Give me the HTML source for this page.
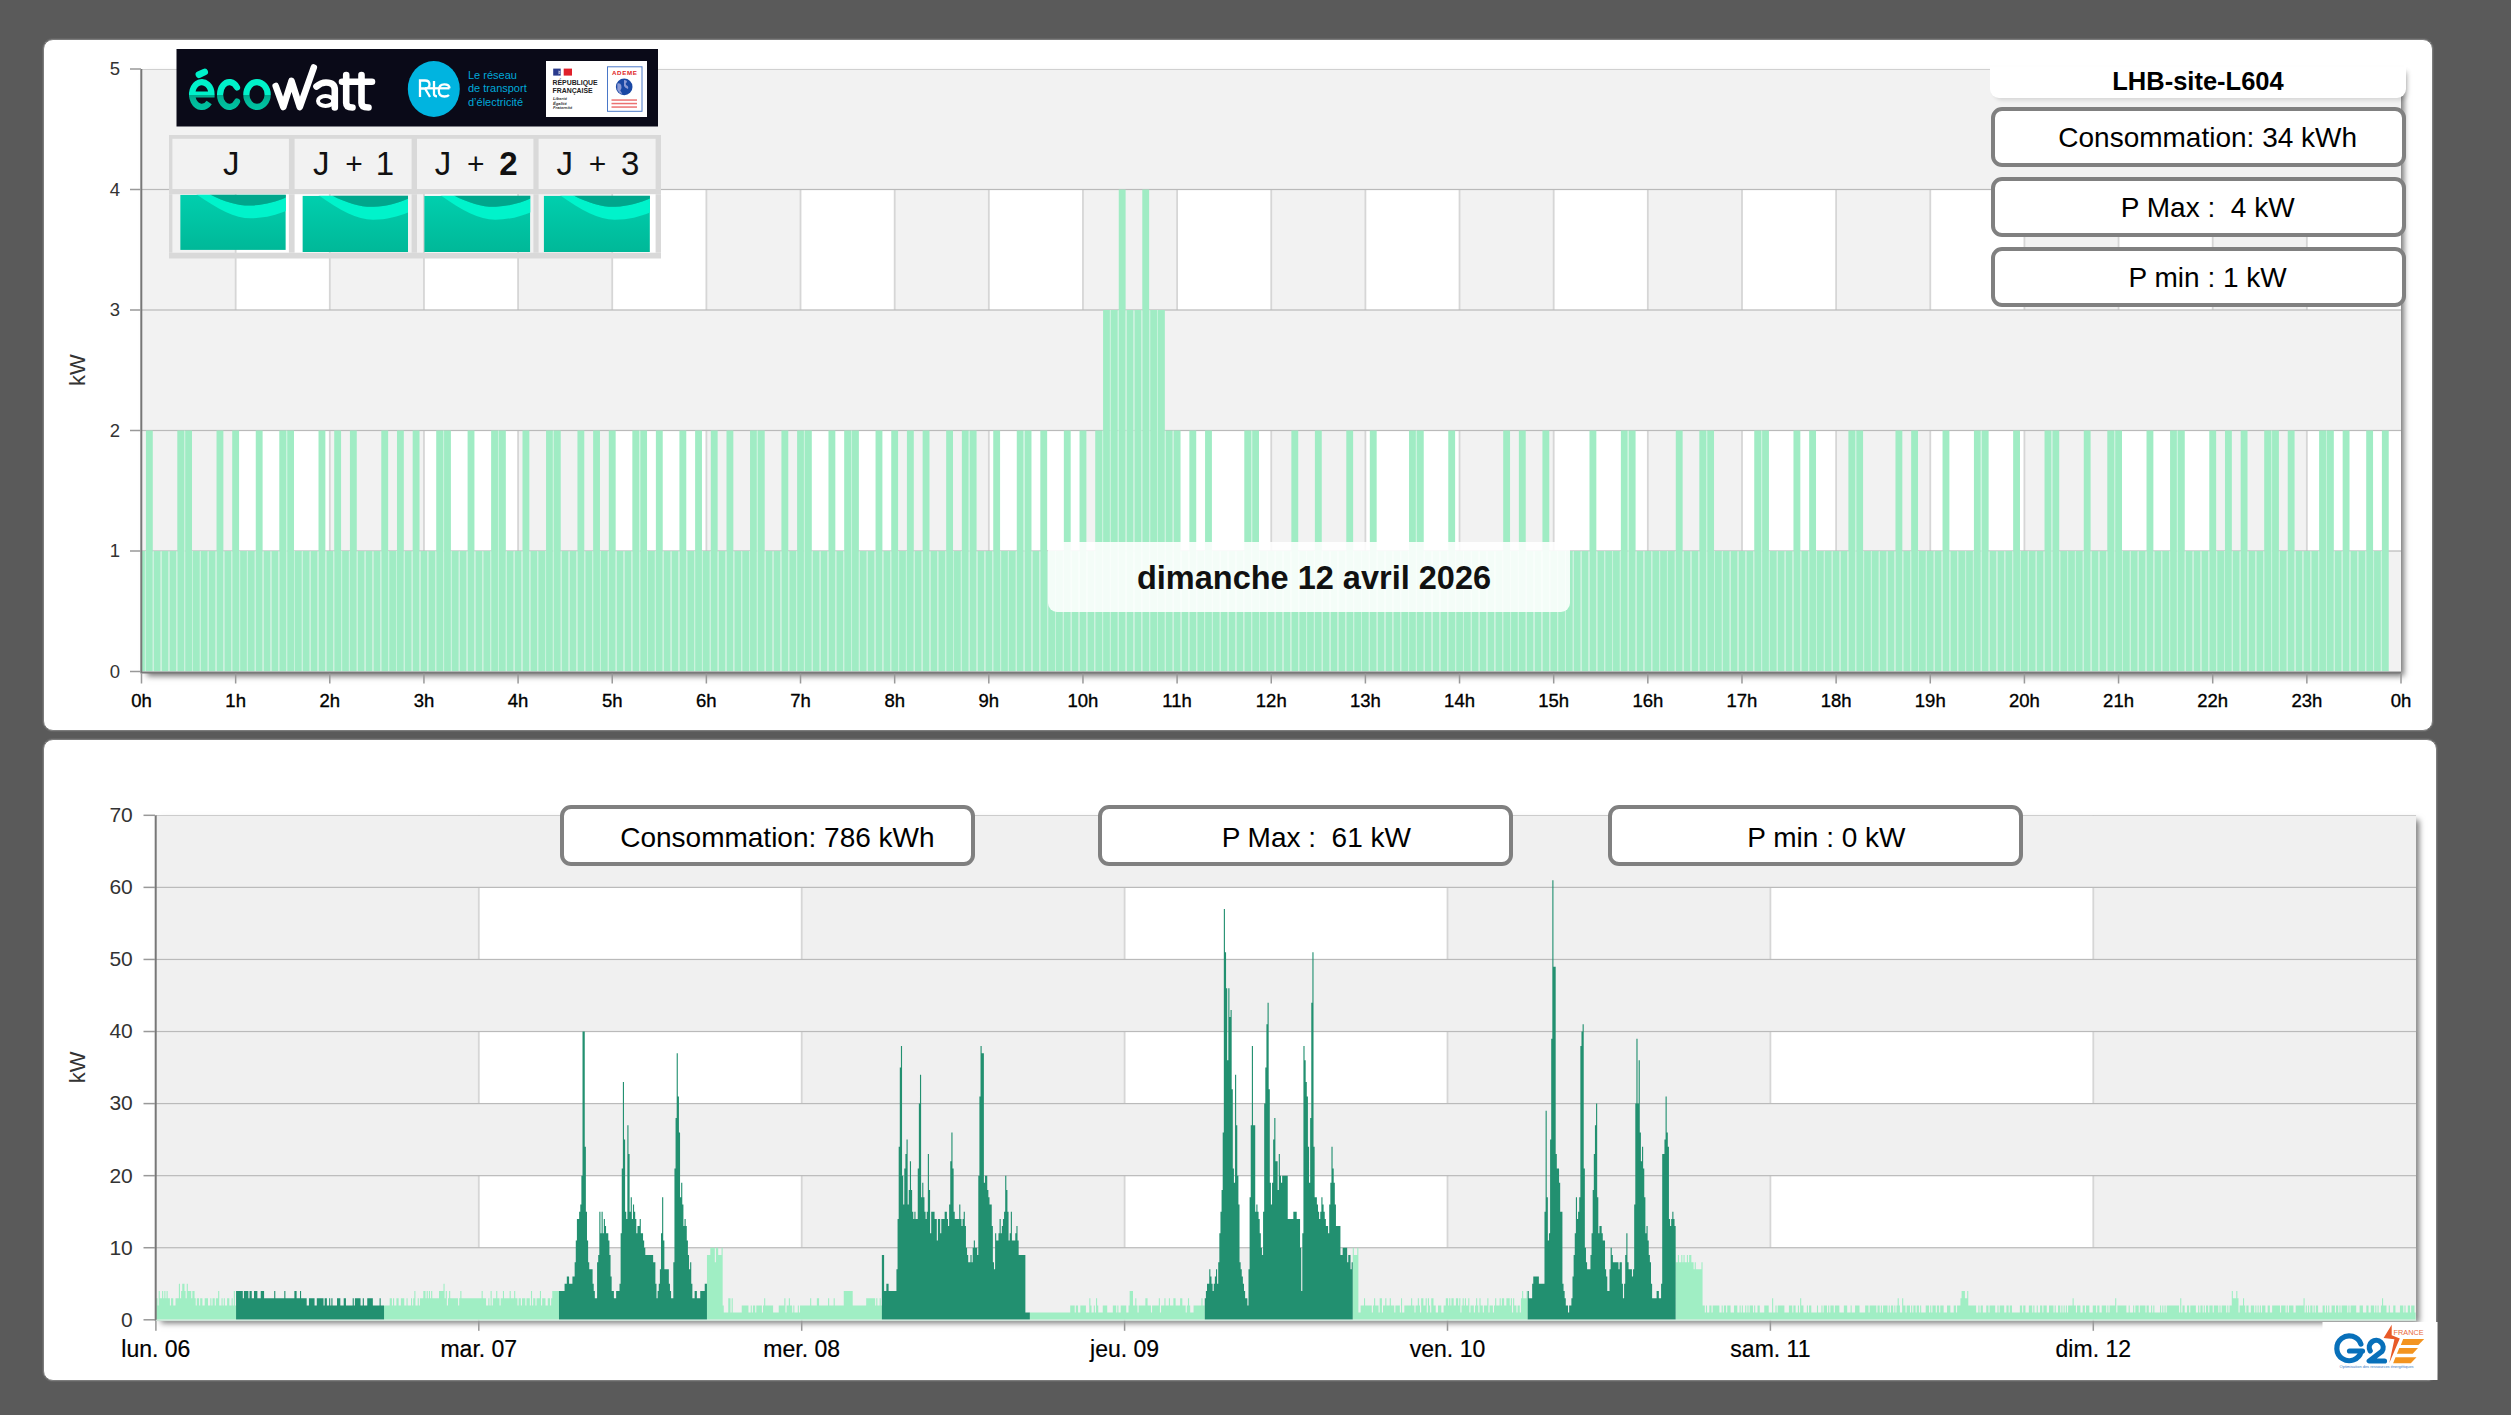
<!DOCTYPE html><html><head><meta charset="utf-8"><title>conso</title><style>
html,body{margin:0;padding:0}
body{width:2511px;height:1415px;background:#5a5a5a;overflow:hidden;position:relative;font-family:"Liberation Sans", sans-serif}
.p{position:absolute;background:#fff;border:1px solid #7c7c7c;box-sizing:border-box;border-radius:10px;box-shadow:0 0 0 1px #656565}
.sh{position:absolute;background:#fff;box-shadow:4px 4px 6px -1px rgba(0,0,0,.55)}
.bx{position:absolute;box-sizing:border-box;border:4px solid #808080;border-radius:11px;background:#fff;color:#000;font-size:28px;white-space:pre;text-align:center}
svg{position:absolute;left:0;top:0}
</style></head><body>
<div class="p" style="left:43px;top:39px;width:2390px;height:692px"></div>
<div class="p" style="left:43px;top:739px;width:2394px;height:642px"></div>
<div class="sh" style="left:141.5px;top:69.0px;width:2259.5px;height:604.0px"></div>
<div class="sh" style="left:155.9px;top:815.3px;width:2260.3px;height:505.0px"></div>
<svg width="2511" height="1415" viewBox="0 0 2511 1415" style="font-family:'Liberation Sans', sans-serif">
<defs><clipPath id="tclip"><rect x="141.50" y="69.00" width="2259.50" height="602.50"/></clipPath>
<clipPath id="bclip"><rect x="155.90" y="815.31" width="2260.30" height="504.49"/></clipPath></defs>
<g clip-path="url(#tclip)">
<rect x="141.50" y="69.00" width="94.15" height="602.50" fill="#f2f2f2"/>
<rect x="329.79" y="69.00" width="94.15" height="602.50" fill="#f2f2f2"/>
<rect x="518.08" y="69.00" width="94.15" height="602.50" fill="#f2f2f2"/>
<rect x="706.38" y="69.00" width="94.15" height="602.50" fill="#f2f2f2"/>
<rect x="894.67" y="69.00" width="94.15" height="602.50" fill="#f2f2f2"/>
<rect x="1082.96" y="69.00" width="94.15" height="602.50" fill="#f2f2f2"/>
<rect x="1271.25" y="69.00" width="94.15" height="602.50" fill="#f2f2f2"/>
<rect x="1459.54" y="69.00" width="94.15" height="602.50" fill="#f2f2f2"/>
<rect x="1647.83" y="69.00" width="94.15" height="602.50" fill="#f2f2f2"/>
<rect x="1836.12" y="69.00" width="94.15" height="602.50" fill="#f2f2f2"/>
<rect x="2024.42" y="69.00" width="94.15" height="602.50" fill="#f2f2f2"/>
<rect x="2212.71" y="69.00" width="94.15" height="602.50" fill="#f2f2f2"/>
<rect x="234.75" y="69.00" width="1.8" height="602.50" fill="#d6d6d6"/>
<rect x="328.89" y="69.00" width="1.8" height="602.50" fill="#d6d6d6"/>
<rect x="423.04" y="69.00" width="1.8" height="602.50" fill="#d6d6d6"/>
<rect x="517.18" y="69.00" width="1.8" height="602.50" fill="#d6d6d6"/>
<rect x="611.33" y="69.00" width="1.8" height="602.50" fill="#d6d6d6"/>
<rect x="705.48" y="69.00" width="1.8" height="602.50" fill="#d6d6d6"/>
<rect x="799.62" y="69.00" width="1.8" height="602.50" fill="#d6d6d6"/>
<rect x="893.77" y="69.00" width="1.8" height="602.50" fill="#d6d6d6"/>
<rect x="987.91" y="69.00" width="1.8" height="602.50" fill="#d6d6d6"/>
<rect x="1082.06" y="69.00" width="1.8" height="602.50" fill="#d6d6d6"/>
<rect x="1176.20" y="69.00" width="1.8" height="602.50" fill="#d6d6d6"/>
<rect x="1270.35" y="69.00" width="1.8" height="602.50" fill="#d6d6d6"/>
<rect x="1364.50" y="69.00" width="1.8" height="602.50" fill="#d6d6d6"/>
<rect x="1458.64" y="69.00" width="1.8" height="602.50" fill="#d6d6d6"/>
<rect x="1552.79" y="69.00" width="1.8" height="602.50" fill="#d6d6d6"/>
<rect x="1646.93" y="69.00" width="1.8" height="602.50" fill="#d6d6d6"/>
<rect x="1741.08" y="69.00" width="1.8" height="602.50" fill="#d6d6d6"/>
<rect x="1835.22" y="69.00" width="1.8" height="602.50" fill="#d6d6d6"/>
<rect x="1929.37" y="69.00" width="1.8" height="602.50" fill="#d6d6d6"/>
<rect x="2023.52" y="69.00" width="1.8" height="602.50" fill="#d6d6d6"/>
<rect x="2117.66" y="69.00" width="1.8" height="602.50" fill="#d6d6d6"/>
<rect x="2211.81" y="69.00" width="1.8" height="602.50" fill="#d6d6d6"/>
<rect x="2305.95" y="69.00" width="1.8" height="602.50" fill="#d6d6d6"/>
<rect x="141.50" y="551.00" width="2259.50" height="120.50" fill="#f2f2f2"/>
<rect x="141.50" y="310.00" width="2259.50" height="120.50" fill="#f2f2f2"/>
<rect x="141.50" y="69.00" width="2259.50" height="120.50" fill="#f2f2f2"/>
<rect x="141.50" y="550.40" width="2259.50" height="1.2" fill="#bababa"/>
<rect x="141.50" y="429.90" width="2259.50" height="1.2" fill="#bababa"/>
<rect x="141.50" y="309.40" width="2259.50" height="1.2" fill="#bababa"/>
<rect x="141.50" y="188.90" width="2259.50" height="1.2" fill="#bababa"/>
<rect x="141.50" y="68.40" width="2259.50" height="1.2" fill="#bababa"/>
<rect x="138.08" y="551.00" width="6.85" height="120.50" fill="#a0ecc4"/>
<rect x="145.92" y="430.50" width="6.85" height="241.00" fill="#a0ecc4"/>
<rect x="153.77" y="551.00" width="6.85" height="120.50" fill="#a0ecc4"/>
<rect x="161.61" y="551.00" width="6.85" height="120.50" fill="#a0ecc4"/>
<rect x="169.46" y="551.00" width="6.85" height="120.50" fill="#a0ecc4"/>
<rect x="177.30" y="430.50" width="6.85" height="241.00" fill="#a0ecc4"/>
<rect x="185.15" y="430.50" width="6.85" height="241.00" fill="#a0ecc4"/>
<rect x="193.00" y="551.00" width="6.85" height="120.50" fill="#a0ecc4"/>
<rect x="200.84" y="551.00" width="6.85" height="120.50" fill="#a0ecc4"/>
<rect x="208.69" y="551.00" width="6.85" height="120.50" fill="#a0ecc4"/>
<rect x="216.53" y="430.50" width="6.85" height="241.00" fill="#a0ecc4"/>
<rect x="224.38" y="551.00" width="6.85" height="120.50" fill="#a0ecc4"/>
<rect x="232.22" y="430.50" width="6.85" height="241.00" fill="#a0ecc4"/>
<rect x="240.07" y="551.00" width="6.85" height="120.50" fill="#a0ecc4"/>
<rect x="247.91" y="551.00" width="6.85" height="120.50" fill="#a0ecc4"/>
<rect x="255.76" y="430.50" width="6.85" height="241.00" fill="#a0ecc4"/>
<rect x="263.61" y="551.00" width="6.85" height="120.50" fill="#a0ecc4"/>
<rect x="271.45" y="551.00" width="6.85" height="120.50" fill="#a0ecc4"/>
<rect x="279.30" y="430.50" width="6.85" height="241.00" fill="#a0ecc4"/>
<rect x="287.14" y="430.50" width="6.85" height="241.00" fill="#a0ecc4"/>
<rect x="294.99" y="551.00" width="6.85" height="120.50" fill="#a0ecc4"/>
<rect x="302.83" y="551.00" width="6.85" height="120.50" fill="#a0ecc4"/>
<rect x="310.68" y="551.00" width="6.85" height="120.50" fill="#a0ecc4"/>
<rect x="318.52" y="430.50" width="6.85" height="241.00" fill="#a0ecc4"/>
<rect x="326.37" y="551.00" width="6.85" height="120.50" fill="#a0ecc4"/>
<rect x="334.21" y="430.50" width="6.85" height="241.00" fill="#a0ecc4"/>
<rect x="342.06" y="551.00" width="6.85" height="120.50" fill="#a0ecc4"/>
<rect x="349.91" y="430.50" width="6.85" height="241.00" fill="#a0ecc4"/>
<rect x="357.75" y="551.00" width="6.85" height="120.50" fill="#a0ecc4"/>
<rect x="365.60" y="551.00" width="6.85" height="120.50" fill="#a0ecc4"/>
<rect x="373.44" y="551.00" width="6.85" height="120.50" fill="#a0ecc4"/>
<rect x="381.29" y="430.50" width="6.85" height="241.00" fill="#a0ecc4"/>
<rect x="389.13" y="551.00" width="6.85" height="120.50" fill="#a0ecc4"/>
<rect x="396.98" y="430.50" width="6.85" height="241.00" fill="#a0ecc4"/>
<rect x="404.82" y="551.00" width="6.85" height="120.50" fill="#a0ecc4"/>
<rect x="412.67" y="430.50" width="6.85" height="241.00" fill="#a0ecc4"/>
<rect x="420.51" y="551.00" width="6.85" height="120.50" fill="#a0ecc4"/>
<rect x="428.36" y="551.00" width="6.85" height="120.50" fill="#a0ecc4"/>
<rect x="436.21" y="430.50" width="6.85" height="241.00" fill="#a0ecc4"/>
<rect x="444.05" y="430.50" width="6.85" height="241.00" fill="#a0ecc4"/>
<rect x="451.90" y="551.00" width="6.85" height="120.50" fill="#a0ecc4"/>
<rect x="459.74" y="551.00" width="6.85" height="120.50" fill="#a0ecc4"/>
<rect x="467.59" y="430.50" width="6.85" height="241.00" fill="#a0ecc4"/>
<rect x="475.43" y="551.00" width="6.85" height="120.50" fill="#a0ecc4"/>
<rect x="483.28" y="551.00" width="6.85" height="120.50" fill="#a0ecc4"/>
<rect x="491.12" y="430.50" width="6.85" height="241.00" fill="#a0ecc4"/>
<rect x="498.97" y="430.50" width="6.85" height="241.00" fill="#a0ecc4"/>
<rect x="506.82" y="551.00" width="6.85" height="120.50" fill="#a0ecc4"/>
<rect x="514.66" y="551.00" width="6.85" height="120.50" fill="#a0ecc4"/>
<rect x="522.51" y="430.50" width="6.85" height="241.00" fill="#a0ecc4"/>
<rect x="530.35" y="551.00" width="6.85" height="120.50" fill="#a0ecc4"/>
<rect x="538.20" y="551.00" width="6.85" height="120.50" fill="#a0ecc4"/>
<rect x="546.04" y="430.50" width="6.85" height="241.00" fill="#a0ecc4"/>
<rect x="553.89" y="430.50" width="6.85" height="241.00" fill="#a0ecc4"/>
<rect x="561.73" y="551.00" width="6.85" height="120.50" fill="#a0ecc4"/>
<rect x="569.58" y="551.00" width="6.85" height="120.50" fill="#a0ecc4"/>
<rect x="577.42" y="430.50" width="6.85" height="241.00" fill="#a0ecc4"/>
<rect x="585.27" y="551.00" width="6.85" height="120.50" fill="#a0ecc4"/>
<rect x="593.12" y="430.50" width="6.85" height="241.00" fill="#a0ecc4"/>
<rect x="600.96" y="551.00" width="6.85" height="120.50" fill="#a0ecc4"/>
<rect x="608.81" y="430.50" width="6.85" height="241.00" fill="#a0ecc4"/>
<rect x="616.65" y="551.00" width="6.85" height="120.50" fill="#a0ecc4"/>
<rect x="624.50" y="551.00" width="6.85" height="120.50" fill="#a0ecc4"/>
<rect x="632.34" y="430.50" width="6.85" height="241.00" fill="#a0ecc4"/>
<rect x="640.19" y="430.50" width="6.85" height="241.00" fill="#a0ecc4"/>
<rect x="648.03" y="551.00" width="6.85" height="120.50" fill="#a0ecc4"/>
<rect x="655.88" y="430.50" width="6.85" height="241.00" fill="#a0ecc4"/>
<rect x="663.72" y="551.00" width="6.85" height="120.50" fill="#a0ecc4"/>
<rect x="671.57" y="551.00" width="6.85" height="120.50" fill="#a0ecc4"/>
<rect x="679.42" y="430.50" width="6.85" height="241.00" fill="#a0ecc4"/>
<rect x="687.26" y="551.00" width="6.85" height="120.50" fill="#a0ecc4"/>
<rect x="695.11" y="430.50" width="6.85" height="241.00" fill="#a0ecc4"/>
<rect x="702.95" y="551.00" width="6.85" height="120.50" fill="#a0ecc4"/>
<rect x="710.80" y="430.50" width="6.85" height="241.00" fill="#a0ecc4"/>
<rect x="718.64" y="551.00" width="6.85" height="120.50" fill="#a0ecc4"/>
<rect x="726.49" y="430.50" width="6.85" height="241.00" fill="#a0ecc4"/>
<rect x="734.33" y="551.00" width="6.85" height="120.50" fill="#a0ecc4"/>
<rect x="742.18" y="551.00" width="6.85" height="120.50" fill="#a0ecc4"/>
<rect x="750.03" y="430.50" width="6.85" height="241.00" fill="#a0ecc4"/>
<rect x="757.87" y="430.50" width="6.85" height="241.00" fill="#a0ecc4"/>
<rect x="765.72" y="551.00" width="6.85" height="120.50" fill="#a0ecc4"/>
<rect x="773.56" y="551.00" width="6.85" height="120.50" fill="#a0ecc4"/>
<rect x="781.41" y="430.50" width="6.85" height="241.00" fill="#a0ecc4"/>
<rect x="789.25" y="551.00" width="6.85" height="120.50" fill="#a0ecc4"/>
<rect x="797.10" y="430.50" width="6.85" height="241.00" fill="#a0ecc4"/>
<rect x="804.94" y="430.50" width="6.85" height="241.00" fill="#a0ecc4"/>
<rect x="812.79" y="551.00" width="6.85" height="120.50" fill="#a0ecc4"/>
<rect x="820.63" y="551.00" width="6.85" height="120.50" fill="#a0ecc4"/>
<rect x="828.48" y="430.50" width="6.85" height="241.00" fill="#a0ecc4"/>
<rect x="836.33" y="551.00" width="6.85" height="120.50" fill="#a0ecc4"/>
<rect x="844.17" y="430.50" width="6.85" height="241.00" fill="#a0ecc4"/>
<rect x="852.02" y="430.50" width="6.85" height="241.00" fill="#a0ecc4"/>
<rect x="859.86" y="551.00" width="6.85" height="120.50" fill="#a0ecc4"/>
<rect x="867.71" y="551.00" width="6.85" height="120.50" fill="#a0ecc4"/>
<rect x="875.55" y="430.50" width="6.85" height="241.00" fill="#a0ecc4"/>
<rect x="883.40" y="551.00" width="6.85" height="120.50" fill="#a0ecc4"/>
<rect x="891.24" y="430.50" width="6.85" height="241.00" fill="#a0ecc4"/>
<rect x="899.09" y="551.00" width="6.85" height="120.50" fill="#a0ecc4"/>
<rect x="906.93" y="430.50" width="6.85" height="241.00" fill="#a0ecc4"/>
<rect x="914.78" y="551.00" width="6.85" height="120.50" fill="#a0ecc4"/>
<rect x="922.63" y="430.50" width="6.85" height="241.00" fill="#a0ecc4"/>
<rect x="930.47" y="551.00" width="6.85" height="120.50" fill="#a0ecc4"/>
<rect x="938.32" y="551.00" width="6.85" height="120.50" fill="#a0ecc4"/>
<rect x="946.16" y="430.50" width="6.85" height="241.00" fill="#a0ecc4"/>
<rect x="954.01" y="551.00" width="6.85" height="120.50" fill="#a0ecc4"/>
<rect x="961.85" y="430.50" width="6.85" height="241.00" fill="#a0ecc4"/>
<rect x="969.70" y="430.50" width="6.85" height="241.00" fill="#a0ecc4"/>
<rect x="977.54" y="551.00" width="6.85" height="120.50" fill="#a0ecc4"/>
<rect x="985.39" y="551.00" width="6.85" height="120.50" fill="#a0ecc4"/>
<rect x="993.24" y="430.50" width="6.85" height="241.00" fill="#a0ecc4"/>
<rect x="1001.08" y="551.00" width="6.85" height="120.50" fill="#a0ecc4"/>
<rect x="1008.93" y="551.00" width="6.85" height="120.50" fill="#a0ecc4"/>
<rect x="1016.77" y="430.50" width="6.85" height="241.00" fill="#a0ecc4"/>
<rect x="1024.62" y="430.50" width="6.85" height="241.00" fill="#a0ecc4"/>
<rect x="1032.46" y="551.00" width="6.85" height="120.50" fill="#a0ecc4"/>
<rect x="1040.31" y="430.50" width="6.85" height="241.00" fill="#a0ecc4"/>
<rect x="1048.15" y="551.00" width="6.85" height="120.50" fill="#a0ecc4"/>
<rect x="1056.00" y="551.00" width="6.85" height="120.50" fill="#a0ecc4"/>
<rect x="1063.84" y="430.50" width="6.85" height="241.00" fill="#a0ecc4"/>
<rect x="1071.69" y="551.00" width="6.85" height="120.50" fill="#a0ecc4"/>
<rect x="1079.54" y="430.50" width="6.85" height="241.00" fill="#a0ecc4"/>
<rect x="1087.38" y="551.00" width="6.85" height="120.50" fill="#a0ecc4"/>
<rect x="1095.23" y="430.50" width="6.85" height="241.00" fill="#a0ecc4"/>
<rect x="1103.07" y="310.00" width="6.85" height="361.50" fill="#a0ecc4"/>
<rect x="1110.92" y="310.00" width="6.85" height="361.50" fill="#a0ecc4"/>
<rect x="1118.76" y="189.50" width="6.85" height="482.00" fill="#a0ecc4"/>
<rect x="1126.61" y="310.00" width="6.85" height="361.50" fill="#a0ecc4"/>
<rect x="1134.45" y="310.00" width="6.85" height="361.50" fill="#a0ecc4"/>
<rect x="1142.30" y="189.50" width="6.85" height="482.00" fill="#a0ecc4"/>
<rect x="1150.14" y="310.00" width="6.85" height="361.50" fill="#a0ecc4"/>
<rect x="1157.99" y="310.00" width="6.85" height="361.50" fill="#a0ecc4"/>
<rect x="1165.84" y="430.50" width="6.85" height="241.00" fill="#a0ecc4"/>
<rect x="1173.68" y="430.50" width="6.85" height="241.00" fill="#a0ecc4"/>
<rect x="1181.53" y="551.00" width="6.85" height="120.50" fill="#a0ecc4"/>
<rect x="1189.37" y="430.50" width="6.85" height="241.00" fill="#a0ecc4"/>
<rect x="1197.22" y="551.00" width="6.85" height="120.50" fill="#a0ecc4"/>
<rect x="1205.06" y="430.50" width="6.85" height="241.00" fill="#a0ecc4"/>
<rect x="1212.91" y="551.00" width="6.85" height="120.50" fill="#a0ecc4"/>
<rect x="1220.75" y="551.00" width="6.85" height="120.50" fill="#a0ecc4"/>
<rect x="1228.60" y="551.00" width="6.85" height="120.50" fill="#a0ecc4"/>
<rect x="1236.45" y="551.00" width="6.85" height="120.50" fill="#a0ecc4"/>
<rect x="1244.29" y="430.50" width="6.85" height="241.00" fill="#a0ecc4"/>
<rect x="1252.14" y="430.50" width="6.85" height="241.00" fill="#a0ecc4"/>
<rect x="1259.98" y="551.00" width="6.85" height="120.50" fill="#a0ecc4"/>
<rect x="1267.83" y="551.00" width="6.85" height="120.50" fill="#a0ecc4"/>
<rect x="1275.67" y="551.00" width="6.85" height="120.50" fill="#a0ecc4"/>
<rect x="1283.52" y="551.00" width="6.85" height="120.50" fill="#a0ecc4"/>
<rect x="1291.36" y="430.50" width="6.85" height="241.00" fill="#a0ecc4"/>
<rect x="1299.21" y="551.00" width="6.85" height="120.50" fill="#a0ecc4"/>
<rect x="1307.05" y="551.00" width="6.85" height="120.50" fill="#a0ecc4"/>
<rect x="1314.90" y="430.50" width="6.85" height="241.00" fill="#a0ecc4"/>
<rect x="1322.75" y="551.00" width="6.85" height="120.50" fill="#a0ecc4"/>
<rect x="1330.59" y="551.00" width="6.85" height="120.50" fill="#a0ecc4"/>
<rect x="1338.44" y="551.00" width="6.85" height="120.50" fill="#a0ecc4"/>
<rect x="1346.28" y="430.50" width="6.85" height="241.00" fill="#a0ecc4"/>
<rect x="1354.13" y="551.00" width="6.85" height="120.50" fill="#a0ecc4"/>
<rect x="1361.97" y="551.00" width="6.85" height="120.50" fill="#a0ecc4"/>
<rect x="1369.82" y="430.50" width="6.85" height="241.00" fill="#a0ecc4"/>
<rect x="1377.66" y="551.00" width="6.85" height="120.50" fill="#a0ecc4"/>
<rect x="1385.51" y="551.00" width="6.85" height="120.50" fill="#a0ecc4"/>
<rect x="1393.36" y="551.00" width="6.85" height="120.50" fill="#a0ecc4"/>
<rect x="1401.20" y="551.00" width="6.85" height="120.50" fill="#a0ecc4"/>
<rect x="1409.05" y="430.50" width="6.85" height="241.00" fill="#a0ecc4"/>
<rect x="1416.89" y="430.50" width="6.85" height="241.00" fill="#a0ecc4"/>
<rect x="1424.74" y="551.00" width="6.85" height="120.50" fill="#a0ecc4"/>
<rect x="1432.58" y="551.00" width="6.85" height="120.50" fill="#a0ecc4"/>
<rect x="1440.43" y="551.00" width="6.85" height="120.50" fill="#a0ecc4"/>
<rect x="1448.27" y="430.50" width="6.85" height="241.00" fill="#a0ecc4"/>
<rect x="1456.12" y="551.00" width="6.85" height="120.50" fill="#a0ecc4"/>
<rect x="1463.96" y="551.00" width="6.85" height="120.50" fill="#a0ecc4"/>
<rect x="1471.81" y="551.00" width="6.85" height="120.50" fill="#a0ecc4"/>
<rect x="1479.66" y="551.00" width="6.85" height="120.50" fill="#a0ecc4"/>
<rect x="1487.50" y="551.00" width="6.85" height="120.50" fill="#a0ecc4"/>
<rect x="1495.35" y="551.00" width="6.85" height="120.50" fill="#a0ecc4"/>
<rect x="1503.19" y="430.50" width="6.85" height="241.00" fill="#a0ecc4"/>
<rect x="1511.04" y="551.00" width="6.85" height="120.50" fill="#a0ecc4"/>
<rect x="1518.88" y="430.50" width="6.85" height="241.00" fill="#a0ecc4"/>
<rect x="1526.73" y="551.00" width="6.85" height="120.50" fill="#a0ecc4"/>
<rect x="1534.57" y="551.00" width="6.85" height="120.50" fill="#a0ecc4"/>
<rect x="1542.42" y="430.50" width="6.85" height="241.00" fill="#a0ecc4"/>
<rect x="1550.26" y="551.00" width="6.85" height="120.50" fill="#a0ecc4"/>
<rect x="1558.11" y="551.00" width="6.85" height="120.50" fill="#a0ecc4"/>
<rect x="1565.96" y="551.00" width="6.85" height="120.50" fill="#a0ecc4"/>
<rect x="1573.80" y="551.00" width="6.85" height="120.50" fill="#a0ecc4"/>
<rect x="1581.65" y="551.00" width="6.85" height="120.50" fill="#a0ecc4"/>
<rect x="1589.49" y="430.50" width="6.85" height="241.00" fill="#a0ecc4"/>
<rect x="1597.34" y="551.00" width="6.85" height="120.50" fill="#a0ecc4"/>
<rect x="1605.18" y="551.00" width="6.85" height="120.50" fill="#a0ecc4"/>
<rect x="1613.03" y="551.00" width="6.85" height="120.50" fill="#a0ecc4"/>
<rect x="1620.87" y="430.50" width="6.85" height="241.00" fill="#a0ecc4"/>
<rect x="1628.72" y="430.50" width="6.85" height="241.00" fill="#a0ecc4"/>
<rect x="1636.57" y="551.00" width="6.85" height="120.50" fill="#a0ecc4"/>
<rect x="1644.41" y="551.00" width="6.85" height="120.50" fill="#a0ecc4"/>
<rect x="1652.26" y="551.00" width="6.85" height="120.50" fill="#a0ecc4"/>
<rect x="1660.10" y="551.00" width="6.85" height="120.50" fill="#a0ecc4"/>
<rect x="1667.95" y="551.00" width="6.85" height="120.50" fill="#a0ecc4"/>
<rect x="1675.79" y="430.50" width="6.85" height="241.00" fill="#a0ecc4"/>
<rect x="1683.64" y="551.00" width="6.85" height="120.50" fill="#a0ecc4"/>
<rect x="1691.48" y="551.00" width="6.85" height="120.50" fill="#a0ecc4"/>
<rect x="1699.33" y="430.50" width="6.85" height="241.00" fill="#a0ecc4"/>
<rect x="1707.17" y="430.50" width="6.85" height="241.00" fill="#a0ecc4"/>
<rect x="1715.02" y="551.00" width="6.85" height="120.50" fill="#a0ecc4"/>
<rect x="1722.87" y="551.00" width="6.85" height="120.50" fill="#a0ecc4"/>
<rect x="1730.71" y="551.00" width="6.85" height="120.50" fill="#a0ecc4"/>
<rect x="1738.56" y="551.00" width="6.85" height="120.50" fill="#a0ecc4"/>
<rect x="1746.40" y="551.00" width="6.85" height="120.50" fill="#a0ecc4"/>
<rect x="1754.25" y="430.50" width="6.85" height="241.00" fill="#a0ecc4"/>
<rect x="1762.09" y="430.50" width="6.85" height="241.00" fill="#a0ecc4"/>
<rect x="1769.94" y="551.00" width="6.85" height="120.50" fill="#a0ecc4"/>
<rect x="1777.78" y="551.00" width="6.85" height="120.50" fill="#a0ecc4"/>
<rect x="1785.63" y="551.00" width="6.85" height="120.50" fill="#a0ecc4"/>
<rect x="1793.47" y="430.50" width="6.85" height="241.00" fill="#a0ecc4"/>
<rect x="1801.32" y="551.00" width="6.85" height="120.50" fill="#a0ecc4"/>
<rect x="1809.17" y="430.50" width="6.85" height="241.00" fill="#a0ecc4"/>
<rect x="1817.01" y="551.00" width="6.85" height="120.50" fill="#a0ecc4"/>
<rect x="1824.86" y="551.00" width="6.85" height="120.50" fill="#a0ecc4"/>
<rect x="1832.70" y="551.00" width="6.85" height="120.50" fill="#a0ecc4"/>
<rect x="1840.55" y="551.00" width="6.85" height="120.50" fill="#a0ecc4"/>
<rect x="1848.39" y="430.50" width="6.85" height="241.00" fill="#a0ecc4"/>
<rect x="1856.24" y="430.50" width="6.85" height="241.00" fill="#a0ecc4"/>
<rect x="1864.08" y="551.00" width="6.85" height="120.50" fill="#a0ecc4"/>
<rect x="1871.93" y="551.00" width="6.85" height="120.50" fill="#a0ecc4"/>
<rect x="1879.78" y="551.00" width="6.85" height="120.50" fill="#a0ecc4"/>
<rect x="1887.62" y="551.00" width="6.85" height="120.50" fill="#a0ecc4"/>
<rect x="1895.47" y="430.50" width="6.85" height="241.00" fill="#a0ecc4"/>
<rect x="1903.31" y="551.00" width="6.85" height="120.50" fill="#a0ecc4"/>
<rect x="1911.16" y="430.50" width="6.85" height="241.00" fill="#a0ecc4"/>
<rect x="1919.00" y="551.00" width="6.85" height="120.50" fill="#a0ecc4"/>
<rect x="1926.85" y="551.00" width="6.85" height="120.50" fill="#a0ecc4"/>
<rect x="1934.69" y="551.00" width="6.85" height="120.50" fill="#a0ecc4"/>
<rect x="1942.54" y="430.50" width="6.85" height="241.00" fill="#a0ecc4"/>
<rect x="1950.38" y="551.00" width="6.85" height="120.50" fill="#a0ecc4"/>
<rect x="1958.23" y="551.00" width="6.85" height="120.50" fill="#a0ecc4"/>
<rect x="1966.08" y="551.00" width="6.85" height="120.50" fill="#a0ecc4"/>
<rect x="1973.92" y="430.50" width="6.85" height="241.00" fill="#a0ecc4"/>
<rect x="1981.77" y="430.50" width="6.85" height="241.00" fill="#a0ecc4"/>
<rect x="1989.61" y="551.00" width="6.85" height="120.50" fill="#a0ecc4"/>
<rect x="1997.46" y="551.00" width="6.85" height="120.50" fill="#a0ecc4"/>
<rect x="2005.30" y="551.00" width="6.85" height="120.50" fill="#a0ecc4"/>
<rect x="2013.15" y="430.50" width="6.85" height="241.00" fill="#a0ecc4"/>
<rect x="2020.99" y="551.00" width="6.85" height="120.50" fill="#a0ecc4"/>
<rect x="2028.84" y="551.00" width="6.85" height="120.50" fill="#a0ecc4"/>
<rect x="2036.68" y="551.00" width="6.85" height="120.50" fill="#a0ecc4"/>
<rect x="2044.53" y="430.50" width="6.85" height="241.00" fill="#a0ecc4"/>
<rect x="2052.38" y="430.50" width="6.85" height="241.00" fill="#a0ecc4"/>
<rect x="2060.22" y="551.00" width="6.85" height="120.50" fill="#a0ecc4"/>
<rect x="2068.07" y="551.00" width="6.85" height="120.50" fill="#a0ecc4"/>
<rect x="2075.91" y="551.00" width="6.85" height="120.50" fill="#a0ecc4"/>
<rect x="2083.76" y="430.50" width="6.85" height="241.00" fill="#a0ecc4"/>
<rect x="2091.60" y="551.00" width="6.85" height="120.50" fill="#a0ecc4"/>
<rect x="2099.45" y="551.00" width="6.85" height="120.50" fill="#a0ecc4"/>
<rect x="2107.29" y="430.50" width="6.85" height="241.00" fill="#a0ecc4"/>
<rect x="2115.14" y="430.50" width="6.85" height="241.00" fill="#a0ecc4"/>
<rect x="2122.99" y="551.00" width="6.85" height="120.50" fill="#a0ecc4"/>
<rect x="2130.83" y="551.00" width="6.85" height="120.50" fill="#a0ecc4"/>
<rect x="2138.68" y="551.00" width="6.85" height="120.50" fill="#a0ecc4"/>
<rect x="2146.52" y="430.50" width="6.85" height="241.00" fill="#a0ecc4"/>
<rect x="2154.37" y="551.00" width="6.85" height="120.50" fill="#a0ecc4"/>
<rect x="2162.21" y="551.00" width="6.85" height="120.50" fill="#a0ecc4"/>
<rect x="2170.06" y="430.50" width="6.85" height="241.00" fill="#a0ecc4"/>
<rect x="2177.90" y="430.50" width="6.85" height="241.00" fill="#a0ecc4"/>
<rect x="2185.75" y="551.00" width="6.85" height="120.50" fill="#a0ecc4"/>
<rect x="2193.59" y="551.00" width="6.85" height="120.50" fill="#a0ecc4"/>
<rect x="2201.44" y="551.00" width="6.85" height="120.50" fill="#a0ecc4"/>
<rect x="2209.29" y="430.50" width="6.85" height="241.00" fill="#a0ecc4"/>
<rect x="2217.13" y="551.00" width="6.85" height="120.50" fill="#a0ecc4"/>
<rect x="2224.98" y="430.50" width="6.85" height="241.00" fill="#a0ecc4"/>
<rect x="2232.82" y="551.00" width="6.85" height="120.50" fill="#a0ecc4"/>
<rect x="2240.67" y="430.50" width="6.85" height="241.00" fill="#a0ecc4"/>
<rect x="2248.51" y="551.00" width="6.85" height="120.50" fill="#a0ecc4"/>
<rect x="2256.36" y="551.00" width="6.85" height="120.50" fill="#a0ecc4"/>
<rect x="2264.20" y="430.50" width="6.85" height="241.00" fill="#a0ecc4"/>
<rect x="2272.05" y="430.50" width="6.85" height="241.00" fill="#a0ecc4"/>
<rect x="2279.89" y="551.00" width="6.85" height="120.50" fill="#a0ecc4"/>
<rect x="2287.74" y="430.50" width="6.85" height="241.00" fill="#a0ecc4"/>
<rect x="2295.59" y="551.00" width="6.85" height="120.50" fill="#a0ecc4"/>
<rect x="2303.43" y="551.00" width="6.85" height="120.50" fill="#a0ecc4"/>
<rect x="2311.28" y="551.00" width="6.85" height="120.50" fill="#a0ecc4"/>
<rect x="2319.12" y="430.50" width="6.85" height="241.00" fill="#a0ecc4"/>
<rect x="2326.97" y="430.50" width="6.85" height="241.00" fill="#a0ecc4"/>
<rect x="2334.81" y="551.00" width="6.85" height="120.50" fill="#a0ecc4"/>
<rect x="2342.66" y="430.50" width="6.85" height="241.00" fill="#a0ecc4"/>
<rect x="2350.50" y="551.00" width="6.85" height="120.50" fill="#a0ecc4"/>
<rect x="2358.35" y="551.00" width="6.85" height="120.50" fill="#a0ecc4"/>
<rect x="2366.20" y="430.50" width="6.85" height="241.00" fill="#a0ecc4"/>
<rect x="2374.04" y="551.00" width="6.85" height="120.50" fill="#a0ecc4"/>
<rect x="2381.89" y="430.50" width="6.85" height="241.00" fill="#a0ecc4"/>
<rect x="144.92" y="551.00" width="1" height="120.50" fill="#c6f3dc"/>
<rect x="152.77" y="551.00" width="1" height="120.50" fill="#c6f3dc"/>
<rect x="160.61" y="551.00" width="1" height="120.50" fill="#c6f3dc"/>
<rect x="168.46" y="551.00" width="1" height="120.50" fill="#c6f3dc"/>
<rect x="176.30" y="551.00" width="1" height="120.50" fill="#c6f3dc"/>
<rect x="184.15" y="430.50" width="1" height="241.00" fill="#c6f3dc"/>
<rect x="192.00" y="551.00" width="1" height="120.50" fill="#c6f3dc"/>
<rect x="199.84" y="551.00" width="1" height="120.50" fill="#c6f3dc"/>
<rect x="207.69" y="551.00" width="1" height="120.50" fill="#c6f3dc"/>
<rect x="215.53" y="551.00" width="1" height="120.50" fill="#c6f3dc"/>
<rect x="223.38" y="551.00" width="1" height="120.50" fill="#c6f3dc"/>
<rect x="231.22" y="551.00" width="1" height="120.50" fill="#c6f3dc"/>
<rect x="239.07" y="551.00" width="1" height="120.50" fill="#c6f3dc"/>
<rect x="246.91" y="551.00" width="1" height="120.50" fill="#c6f3dc"/>
<rect x="254.76" y="551.00" width="1" height="120.50" fill="#c6f3dc"/>
<rect x="262.61" y="551.00" width="1" height="120.50" fill="#c6f3dc"/>
<rect x="270.45" y="551.00" width="1" height="120.50" fill="#c6f3dc"/>
<rect x="278.30" y="551.00" width="1" height="120.50" fill="#c6f3dc"/>
<rect x="286.14" y="430.50" width="1" height="241.00" fill="#c6f3dc"/>
<rect x="293.99" y="551.00" width="1" height="120.50" fill="#c6f3dc"/>
<rect x="301.83" y="551.00" width="1" height="120.50" fill="#c6f3dc"/>
<rect x="309.68" y="551.00" width="1" height="120.50" fill="#c6f3dc"/>
<rect x="317.52" y="551.00" width="1" height="120.50" fill="#c6f3dc"/>
<rect x="325.37" y="551.00" width="1" height="120.50" fill="#c6f3dc"/>
<rect x="333.21" y="551.00" width="1" height="120.50" fill="#c6f3dc"/>
<rect x="341.06" y="551.00" width="1" height="120.50" fill="#c6f3dc"/>
<rect x="348.91" y="551.00" width="1" height="120.50" fill="#c6f3dc"/>
<rect x="356.75" y="551.00" width="1" height="120.50" fill="#c6f3dc"/>
<rect x="364.60" y="551.00" width="1" height="120.50" fill="#c6f3dc"/>
<rect x="372.44" y="551.00" width="1" height="120.50" fill="#c6f3dc"/>
<rect x="380.29" y="551.00" width="1" height="120.50" fill="#c6f3dc"/>
<rect x="388.13" y="551.00" width="1" height="120.50" fill="#c6f3dc"/>
<rect x="395.98" y="551.00" width="1" height="120.50" fill="#c6f3dc"/>
<rect x="403.82" y="551.00" width="1" height="120.50" fill="#c6f3dc"/>
<rect x="411.67" y="551.00" width="1" height="120.50" fill="#c6f3dc"/>
<rect x="419.51" y="551.00" width="1" height="120.50" fill="#c6f3dc"/>
<rect x="427.36" y="551.00" width="1" height="120.50" fill="#c6f3dc"/>
<rect x="435.21" y="551.00" width="1" height="120.50" fill="#c6f3dc"/>
<rect x="443.05" y="430.50" width="1" height="241.00" fill="#c6f3dc"/>
<rect x="450.90" y="551.00" width="1" height="120.50" fill="#c6f3dc"/>
<rect x="458.74" y="551.00" width="1" height="120.50" fill="#c6f3dc"/>
<rect x="466.59" y="551.00" width="1" height="120.50" fill="#c6f3dc"/>
<rect x="474.43" y="551.00" width="1" height="120.50" fill="#c6f3dc"/>
<rect x="482.28" y="551.00" width="1" height="120.50" fill="#c6f3dc"/>
<rect x="490.12" y="551.00" width="1" height="120.50" fill="#c6f3dc"/>
<rect x="497.97" y="430.50" width="1" height="241.00" fill="#c6f3dc"/>
<rect x="505.82" y="551.00" width="1" height="120.50" fill="#c6f3dc"/>
<rect x="513.66" y="551.00" width="1" height="120.50" fill="#c6f3dc"/>
<rect x="521.51" y="551.00" width="1" height="120.50" fill="#c6f3dc"/>
<rect x="529.35" y="551.00" width="1" height="120.50" fill="#c6f3dc"/>
<rect x="537.20" y="551.00" width="1" height="120.50" fill="#c6f3dc"/>
<rect x="545.04" y="551.00" width="1" height="120.50" fill="#c6f3dc"/>
<rect x="552.89" y="430.50" width="1" height="241.00" fill="#c6f3dc"/>
<rect x="560.73" y="551.00" width="1" height="120.50" fill="#c6f3dc"/>
<rect x="568.58" y="551.00" width="1" height="120.50" fill="#c6f3dc"/>
<rect x="576.42" y="551.00" width="1" height="120.50" fill="#c6f3dc"/>
<rect x="584.27" y="551.00" width="1" height="120.50" fill="#c6f3dc"/>
<rect x="592.12" y="551.00" width="1" height="120.50" fill="#c6f3dc"/>
<rect x="599.96" y="551.00" width="1" height="120.50" fill="#c6f3dc"/>
<rect x="607.81" y="551.00" width="1" height="120.50" fill="#c6f3dc"/>
<rect x="615.65" y="551.00" width="1" height="120.50" fill="#c6f3dc"/>
<rect x="623.50" y="551.00" width="1" height="120.50" fill="#c6f3dc"/>
<rect x="631.34" y="551.00" width="1" height="120.50" fill="#c6f3dc"/>
<rect x="639.19" y="430.50" width="1" height="241.00" fill="#c6f3dc"/>
<rect x="647.03" y="551.00" width="1" height="120.50" fill="#c6f3dc"/>
<rect x="654.88" y="551.00" width="1" height="120.50" fill="#c6f3dc"/>
<rect x="662.72" y="551.00" width="1" height="120.50" fill="#c6f3dc"/>
<rect x="670.57" y="551.00" width="1" height="120.50" fill="#c6f3dc"/>
<rect x="678.42" y="551.00" width="1" height="120.50" fill="#c6f3dc"/>
<rect x="686.26" y="551.00" width="1" height="120.50" fill="#c6f3dc"/>
<rect x="694.11" y="551.00" width="1" height="120.50" fill="#c6f3dc"/>
<rect x="701.95" y="551.00" width="1" height="120.50" fill="#c6f3dc"/>
<rect x="709.80" y="551.00" width="1" height="120.50" fill="#c6f3dc"/>
<rect x="717.64" y="551.00" width="1" height="120.50" fill="#c6f3dc"/>
<rect x="725.49" y="551.00" width="1" height="120.50" fill="#c6f3dc"/>
<rect x="733.33" y="551.00" width="1" height="120.50" fill="#c6f3dc"/>
<rect x="741.18" y="551.00" width="1" height="120.50" fill="#c6f3dc"/>
<rect x="749.03" y="551.00" width="1" height="120.50" fill="#c6f3dc"/>
<rect x="756.87" y="430.50" width="1" height="241.00" fill="#c6f3dc"/>
<rect x="764.72" y="551.00" width="1" height="120.50" fill="#c6f3dc"/>
<rect x="772.56" y="551.00" width="1" height="120.50" fill="#c6f3dc"/>
<rect x="780.41" y="551.00" width="1" height="120.50" fill="#c6f3dc"/>
<rect x="788.25" y="551.00" width="1" height="120.50" fill="#c6f3dc"/>
<rect x="796.10" y="551.00" width="1" height="120.50" fill="#c6f3dc"/>
<rect x="803.94" y="430.50" width="1" height="241.00" fill="#c6f3dc"/>
<rect x="811.79" y="551.00" width="1" height="120.50" fill="#c6f3dc"/>
<rect x="819.63" y="551.00" width="1" height="120.50" fill="#c6f3dc"/>
<rect x="827.48" y="551.00" width="1" height="120.50" fill="#c6f3dc"/>
<rect x="835.33" y="551.00" width="1" height="120.50" fill="#c6f3dc"/>
<rect x="843.17" y="551.00" width="1" height="120.50" fill="#c6f3dc"/>
<rect x="851.02" y="430.50" width="1" height="241.00" fill="#c6f3dc"/>
<rect x="858.86" y="551.00" width="1" height="120.50" fill="#c6f3dc"/>
<rect x="866.71" y="551.00" width="1" height="120.50" fill="#c6f3dc"/>
<rect x="874.55" y="551.00" width="1" height="120.50" fill="#c6f3dc"/>
<rect x="882.40" y="551.00" width="1" height="120.50" fill="#c6f3dc"/>
<rect x="890.24" y="551.00" width="1" height="120.50" fill="#c6f3dc"/>
<rect x="898.09" y="551.00" width="1" height="120.50" fill="#c6f3dc"/>
<rect x="905.93" y="551.00" width="1" height="120.50" fill="#c6f3dc"/>
<rect x="913.78" y="551.00" width="1" height="120.50" fill="#c6f3dc"/>
<rect x="921.63" y="551.00" width="1" height="120.50" fill="#c6f3dc"/>
<rect x="929.47" y="551.00" width="1" height="120.50" fill="#c6f3dc"/>
<rect x="937.32" y="551.00" width="1" height="120.50" fill="#c6f3dc"/>
<rect x="945.16" y="551.00" width="1" height="120.50" fill="#c6f3dc"/>
<rect x="953.01" y="551.00" width="1" height="120.50" fill="#c6f3dc"/>
<rect x="960.85" y="551.00" width="1" height="120.50" fill="#c6f3dc"/>
<rect x="968.70" y="430.50" width="1" height="241.00" fill="#c6f3dc"/>
<rect x="976.54" y="551.00" width="1" height="120.50" fill="#c6f3dc"/>
<rect x="984.39" y="551.00" width="1" height="120.50" fill="#c6f3dc"/>
<rect x="992.24" y="551.00" width="1" height="120.50" fill="#c6f3dc"/>
<rect x="1000.08" y="551.00" width="1" height="120.50" fill="#c6f3dc"/>
<rect x="1007.93" y="551.00" width="1" height="120.50" fill="#c6f3dc"/>
<rect x="1015.77" y="551.00" width="1" height="120.50" fill="#c6f3dc"/>
<rect x="1023.62" y="430.50" width="1" height="241.00" fill="#c6f3dc"/>
<rect x="1031.46" y="551.00" width="1" height="120.50" fill="#c6f3dc"/>
<rect x="1039.31" y="551.00" width="1" height="120.50" fill="#c6f3dc"/>
<rect x="1047.15" y="551.00" width="1" height="120.50" fill="#c6f3dc"/>
<rect x="1055.00" y="551.00" width="1" height="120.50" fill="#c6f3dc"/>
<rect x="1062.84" y="551.00" width="1" height="120.50" fill="#c6f3dc"/>
<rect x="1070.69" y="551.00" width="1" height="120.50" fill="#c6f3dc"/>
<rect x="1078.54" y="551.00" width="1" height="120.50" fill="#c6f3dc"/>
<rect x="1086.38" y="551.00" width="1" height="120.50" fill="#c6f3dc"/>
<rect x="1094.23" y="551.00" width="1" height="120.50" fill="#c6f3dc"/>
<rect x="1102.07" y="430.50" width="1" height="241.00" fill="#c6f3dc"/>
<rect x="1109.92" y="310.00" width="1" height="361.50" fill="#c6f3dc"/>
<rect x="1117.76" y="310.00" width="1" height="361.50" fill="#c6f3dc"/>
<rect x="1125.61" y="310.00" width="1" height="361.50" fill="#c6f3dc"/>
<rect x="1133.45" y="310.00" width="1" height="361.50" fill="#c6f3dc"/>
<rect x="1141.30" y="310.00" width="1" height="361.50" fill="#c6f3dc"/>
<rect x="1149.14" y="310.00" width="1" height="361.50" fill="#c6f3dc"/>
<rect x="1156.99" y="310.00" width="1" height="361.50" fill="#c6f3dc"/>
<rect x="1164.84" y="430.50" width="1" height="241.00" fill="#c6f3dc"/>
<rect x="1172.68" y="430.50" width="1" height="241.00" fill="#c6f3dc"/>
<rect x="1180.53" y="551.00" width="1" height="120.50" fill="#c6f3dc"/>
<rect x="1188.37" y="551.00" width="1" height="120.50" fill="#c6f3dc"/>
<rect x="1196.22" y="551.00" width="1" height="120.50" fill="#c6f3dc"/>
<rect x="1204.06" y="551.00" width="1" height="120.50" fill="#c6f3dc"/>
<rect x="1211.91" y="551.00" width="1" height="120.50" fill="#c6f3dc"/>
<rect x="1219.75" y="551.00" width="1" height="120.50" fill="#c6f3dc"/>
<rect x="1227.60" y="551.00" width="1" height="120.50" fill="#c6f3dc"/>
<rect x="1235.45" y="551.00" width="1" height="120.50" fill="#c6f3dc"/>
<rect x="1243.29" y="551.00" width="1" height="120.50" fill="#c6f3dc"/>
<rect x="1251.14" y="430.50" width="1" height="241.00" fill="#c6f3dc"/>
<rect x="1258.98" y="551.00" width="1" height="120.50" fill="#c6f3dc"/>
<rect x="1266.83" y="551.00" width="1" height="120.50" fill="#c6f3dc"/>
<rect x="1274.67" y="551.00" width="1" height="120.50" fill="#c6f3dc"/>
<rect x="1282.52" y="551.00" width="1" height="120.50" fill="#c6f3dc"/>
<rect x="1290.36" y="551.00" width="1" height="120.50" fill="#c6f3dc"/>
<rect x="1298.21" y="551.00" width="1" height="120.50" fill="#c6f3dc"/>
<rect x="1306.05" y="551.00" width="1" height="120.50" fill="#c6f3dc"/>
<rect x="1313.90" y="551.00" width="1" height="120.50" fill="#c6f3dc"/>
<rect x="1321.75" y="551.00" width="1" height="120.50" fill="#c6f3dc"/>
<rect x="1329.59" y="551.00" width="1" height="120.50" fill="#c6f3dc"/>
<rect x="1337.44" y="551.00" width="1" height="120.50" fill="#c6f3dc"/>
<rect x="1345.28" y="551.00" width="1" height="120.50" fill="#c6f3dc"/>
<rect x="1353.13" y="551.00" width="1" height="120.50" fill="#c6f3dc"/>
<rect x="1360.97" y="551.00" width="1" height="120.50" fill="#c6f3dc"/>
<rect x="1368.82" y="551.00" width="1" height="120.50" fill="#c6f3dc"/>
<rect x="1376.66" y="551.00" width="1" height="120.50" fill="#c6f3dc"/>
<rect x="1384.51" y="551.00" width="1" height="120.50" fill="#c6f3dc"/>
<rect x="1392.36" y="551.00" width="1" height="120.50" fill="#c6f3dc"/>
<rect x="1400.20" y="551.00" width="1" height="120.50" fill="#c6f3dc"/>
<rect x="1408.05" y="551.00" width="1" height="120.50" fill="#c6f3dc"/>
<rect x="1415.89" y="430.50" width="1" height="241.00" fill="#c6f3dc"/>
<rect x="1423.74" y="551.00" width="1" height="120.50" fill="#c6f3dc"/>
<rect x="1431.58" y="551.00" width="1" height="120.50" fill="#c6f3dc"/>
<rect x="1439.43" y="551.00" width="1" height="120.50" fill="#c6f3dc"/>
<rect x="1447.27" y="551.00" width="1" height="120.50" fill="#c6f3dc"/>
<rect x="1455.12" y="551.00" width="1" height="120.50" fill="#c6f3dc"/>
<rect x="1462.96" y="551.00" width="1" height="120.50" fill="#c6f3dc"/>
<rect x="1470.81" y="551.00" width="1" height="120.50" fill="#c6f3dc"/>
<rect x="1478.66" y="551.00" width="1" height="120.50" fill="#c6f3dc"/>
<rect x="1486.50" y="551.00" width="1" height="120.50" fill="#c6f3dc"/>
<rect x="1494.35" y="551.00" width="1" height="120.50" fill="#c6f3dc"/>
<rect x="1502.19" y="551.00" width="1" height="120.50" fill="#c6f3dc"/>
<rect x="1510.04" y="551.00" width="1" height="120.50" fill="#c6f3dc"/>
<rect x="1517.88" y="551.00" width="1" height="120.50" fill="#c6f3dc"/>
<rect x="1525.73" y="551.00" width="1" height="120.50" fill="#c6f3dc"/>
<rect x="1533.57" y="551.00" width="1" height="120.50" fill="#c6f3dc"/>
<rect x="1541.42" y="551.00" width="1" height="120.50" fill="#c6f3dc"/>
<rect x="1549.26" y="551.00" width="1" height="120.50" fill="#c6f3dc"/>
<rect x="1557.11" y="551.00" width="1" height="120.50" fill="#c6f3dc"/>
<rect x="1564.96" y="551.00" width="1" height="120.50" fill="#c6f3dc"/>
<rect x="1572.80" y="551.00" width="1" height="120.50" fill="#c6f3dc"/>
<rect x="1580.65" y="551.00" width="1" height="120.50" fill="#c6f3dc"/>
<rect x="1588.49" y="551.00" width="1" height="120.50" fill="#c6f3dc"/>
<rect x="1596.34" y="551.00" width="1" height="120.50" fill="#c6f3dc"/>
<rect x="1604.18" y="551.00" width="1" height="120.50" fill="#c6f3dc"/>
<rect x="1612.03" y="551.00" width="1" height="120.50" fill="#c6f3dc"/>
<rect x="1619.87" y="551.00" width="1" height="120.50" fill="#c6f3dc"/>
<rect x="1627.72" y="430.50" width="1" height="241.00" fill="#c6f3dc"/>
<rect x="1635.57" y="551.00" width="1" height="120.50" fill="#c6f3dc"/>
<rect x="1643.41" y="551.00" width="1" height="120.50" fill="#c6f3dc"/>
<rect x="1651.26" y="551.00" width="1" height="120.50" fill="#c6f3dc"/>
<rect x="1659.10" y="551.00" width="1" height="120.50" fill="#c6f3dc"/>
<rect x="1666.95" y="551.00" width="1" height="120.50" fill="#c6f3dc"/>
<rect x="1674.79" y="551.00" width="1" height="120.50" fill="#c6f3dc"/>
<rect x="1682.64" y="551.00" width="1" height="120.50" fill="#c6f3dc"/>
<rect x="1690.48" y="551.00" width="1" height="120.50" fill="#c6f3dc"/>
<rect x="1698.33" y="551.00" width="1" height="120.50" fill="#c6f3dc"/>
<rect x="1706.17" y="430.50" width="1" height="241.00" fill="#c6f3dc"/>
<rect x="1714.02" y="551.00" width="1" height="120.50" fill="#c6f3dc"/>
<rect x="1721.87" y="551.00" width="1" height="120.50" fill="#c6f3dc"/>
<rect x="1729.71" y="551.00" width="1" height="120.50" fill="#c6f3dc"/>
<rect x="1737.56" y="551.00" width="1" height="120.50" fill="#c6f3dc"/>
<rect x="1745.40" y="551.00" width="1" height="120.50" fill="#c6f3dc"/>
<rect x="1753.25" y="551.00" width="1" height="120.50" fill="#c6f3dc"/>
<rect x="1761.09" y="430.50" width="1" height="241.00" fill="#c6f3dc"/>
<rect x="1768.94" y="551.00" width="1" height="120.50" fill="#c6f3dc"/>
<rect x="1776.78" y="551.00" width="1" height="120.50" fill="#c6f3dc"/>
<rect x="1784.63" y="551.00" width="1" height="120.50" fill="#c6f3dc"/>
<rect x="1792.47" y="551.00" width="1" height="120.50" fill="#c6f3dc"/>
<rect x="1800.32" y="551.00" width="1" height="120.50" fill="#c6f3dc"/>
<rect x="1808.17" y="551.00" width="1" height="120.50" fill="#c6f3dc"/>
<rect x="1816.01" y="551.00" width="1" height="120.50" fill="#c6f3dc"/>
<rect x="1823.86" y="551.00" width="1" height="120.50" fill="#c6f3dc"/>
<rect x="1831.70" y="551.00" width="1" height="120.50" fill="#c6f3dc"/>
<rect x="1839.55" y="551.00" width="1" height="120.50" fill="#c6f3dc"/>
<rect x="1847.39" y="551.00" width="1" height="120.50" fill="#c6f3dc"/>
<rect x="1855.24" y="430.50" width="1" height="241.00" fill="#c6f3dc"/>
<rect x="1863.08" y="551.00" width="1" height="120.50" fill="#c6f3dc"/>
<rect x="1870.93" y="551.00" width="1" height="120.50" fill="#c6f3dc"/>
<rect x="1878.78" y="551.00" width="1" height="120.50" fill="#c6f3dc"/>
<rect x="1886.62" y="551.00" width="1" height="120.50" fill="#c6f3dc"/>
<rect x="1894.47" y="551.00" width="1" height="120.50" fill="#c6f3dc"/>
<rect x="1902.31" y="551.00" width="1" height="120.50" fill="#c6f3dc"/>
<rect x="1910.16" y="551.00" width="1" height="120.50" fill="#c6f3dc"/>
<rect x="1918.00" y="551.00" width="1" height="120.50" fill="#c6f3dc"/>
<rect x="1925.85" y="551.00" width="1" height="120.50" fill="#c6f3dc"/>
<rect x="1933.69" y="551.00" width="1" height="120.50" fill="#c6f3dc"/>
<rect x="1941.54" y="551.00" width="1" height="120.50" fill="#c6f3dc"/>
<rect x="1949.38" y="551.00" width="1" height="120.50" fill="#c6f3dc"/>
<rect x="1957.23" y="551.00" width="1" height="120.50" fill="#c6f3dc"/>
<rect x="1965.08" y="551.00" width="1" height="120.50" fill="#c6f3dc"/>
<rect x="1972.92" y="551.00" width="1" height="120.50" fill="#c6f3dc"/>
<rect x="1980.77" y="430.50" width="1" height="241.00" fill="#c6f3dc"/>
<rect x="1988.61" y="551.00" width="1" height="120.50" fill="#c6f3dc"/>
<rect x="1996.46" y="551.00" width="1" height="120.50" fill="#c6f3dc"/>
<rect x="2004.30" y="551.00" width="1" height="120.50" fill="#c6f3dc"/>
<rect x="2012.15" y="551.00" width="1" height="120.50" fill="#c6f3dc"/>
<rect x="2019.99" y="551.00" width="1" height="120.50" fill="#c6f3dc"/>
<rect x="2027.84" y="551.00" width="1" height="120.50" fill="#c6f3dc"/>
<rect x="2035.68" y="551.00" width="1" height="120.50" fill="#c6f3dc"/>
<rect x="2043.53" y="551.00" width="1" height="120.50" fill="#c6f3dc"/>
<rect x="2051.38" y="430.50" width="1" height="241.00" fill="#c6f3dc"/>
<rect x="2059.22" y="551.00" width="1" height="120.50" fill="#c6f3dc"/>
<rect x="2067.07" y="551.00" width="1" height="120.50" fill="#c6f3dc"/>
<rect x="2074.91" y="551.00" width="1" height="120.50" fill="#c6f3dc"/>
<rect x="2082.76" y="551.00" width="1" height="120.50" fill="#c6f3dc"/>
<rect x="2090.60" y="551.00" width="1" height="120.50" fill="#c6f3dc"/>
<rect x="2098.45" y="551.00" width="1" height="120.50" fill="#c6f3dc"/>
<rect x="2106.29" y="551.00" width="1" height="120.50" fill="#c6f3dc"/>
<rect x="2114.14" y="430.50" width="1" height="241.00" fill="#c6f3dc"/>
<rect x="2121.99" y="551.00" width="1" height="120.50" fill="#c6f3dc"/>
<rect x="2129.83" y="551.00" width="1" height="120.50" fill="#c6f3dc"/>
<rect x="2137.68" y="551.00" width="1" height="120.50" fill="#c6f3dc"/>
<rect x="2145.52" y="551.00" width="1" height="120.50" fill="#c6f3dc"/>
<rect x="2153.37" y="551.00" width="1" height="120.50" fill="#c6f3dc"/>
<rect x="2161.21" y="551.00" width="1" height="120.50" fill="#c6f3dc"/>
<rect x="2169.06" y="551.00" width="1" height="120.50" fill="#c6f3dc"/>
<rect x="2176.90" y="430.50" width="1" height="241.00" fill="#c6f3dc"/>
<rect x="2184.75" y="551.00" width="1" height="120.50" fill="#c6f3dc"/>
<rect x="2192.59" y="551.00" width="1" height="120.50" fill="#c6f3dc"/>
<rect x="2200.44" y="551.00" width="1" height="120.50" fill="#c6f3dc"/>
<rect x="2208.29" y="551.00" width="1" height="120.50" fill="#c6f3dc"/>
<rect x="2216.13" y="551.00" width="1" height="120.50" fill="#c6f3dc"/>
<rect x="2223.98" y="551.00" width="1" height="120.50" fill="#c6f3dc"/>
<rect x="2231.82" y="551.00" width="1" height="120.50" fill="#c6f3dc"/>
<rect x="2239.67" y="551.00" width="1" height="120.50" fill="#c6f3dc"/>
<rect x="2247.51" y="551.00" width="1" height="120.50" fill="#c6f3dc"/>
<rect x="2255.36" y="551.00" width="1" height="120.50" fill="#c6f3dc"/>
<rect x="2263.20" y="551.00" width="1" height="120.50" fill="#c6f3dc"/>
<rect x="2271.05" y="430.50" width="1" height="241.00" fill="#c6f3dc"/>
<rect x="2278.89" y="551.00" width="1" height="120.50" fill="#c6f3dc"/>
<rect x="2286.74" y="551.00" width="1" height="120.50" fill="#c6f3dc"/>
<rect x="2294.59" y="551.00" width="1" height="120.50" fill="#c6f3dc"/>
<rect x="2302.43" y="551.00" width="1" height="120.50" fill="#c6f3dc"/>
<rect x="2310.28" y="551.00" width="1" height="120.50" fill="#c6f3dc"/>
<rect x="2318.12" y="551.00" width="1" height="120.50" fill="#c6f3dc"/>
<rect x="2325.97" y="430.50" width="1" height="241.00" fill="#c6f3dc"/>
<rect x="2333.81" y="551.00" width="1" height="120.50" fill="#c6f3dc"/>
<rect x="2341.66" y="551.00" width="1" height="120.50" fill="#c6f3dc"/>
<rect x="2349.50" y="551.00" width="1" height="120.50" fill="#c6f3dc"/>
<rect x="2357.35" y="551.00" width="1" height="120.50" fill="#c6f3dc"/>
<rect x="2365.20" y="551.00" width="1" height="120.50" fill="#c6f3dc"/>
<rect x="2373.04" y="551.00" width="1" height="120.50" fill="#c6f3dc"/>
<rect x="2380.89" y="551.00" width="1" height="120.50" fill="#c6f3dc"/>
</g>
<rect x="140.30" y="69.00" width="2" height="604.50" fill="#777"/>
<rect x="141.50" y="671.50" width="2259.50" height="2" fill="#7a7a7a"/>
<rect x="130" y="670.75" width="11" height="1.5" fill="#999"/>
<text x="120" y="677.8" font-size="18.5" fill="#333" text-anchor="end">0</text>
<rect x="130" y="550.25" width="11" height="1.5" fill="#999"/>
<text x="120" y="557.3" font-size="18.5" fill="#333" text-anchor="end">1</text>
<rect x="130" y="429.75" width="11" height="1.5" fill="#999"/>
<text x="120" y="436.8" font-size="18.5" fill="#333" text-anchor="end">2</text>
<rect x="130" y="309.25" width="11" height="1.5" fill="#999"/>
<text x="120" y="316.3" font-size="18.5" fill="#333" text-anchor="end">3</text>
<rect x="130" y="188.75" width="11" height="1.5" fill="#999"/>
<text x="120" y="195.8" font-size="18.5" fill="#333" text-anchor="end">4</text>
<rect x="130" y="68.25" width="11" height="1.5" fill="#999"/>
<text x="120" y="75.3" font-size="18.5" fill="#333" text-anchor="end">5</text>
<rect x="140.75" y="673.50" width="1.5" height="10" fill="#999"/>
<text x="141.50" y="707" font-size="18.5" fill="#000" stroke="#000" stroke-width="0.35" text-anchor="middle">0h</text>
<rect x="234.90" y="673.50" width="1.5" height="10" fill="#999"/>
<text x="235.65" y="707" font-size="18.5" fill="#000" stroke="#000" stroke-width="0.35" text-anchor="middle">1h</text>
<rect x="329.04" y="673.50" width="1.5" height="10" fill="#999"/>
<text x="329.79" y="707" font-size="18.5" fill="#000" stroke="#000" stroke-width="0.35" text-anchor="middle">2h</text>
<rect x="423.19" y="673.50" width="1.5" height="10" fill="#999"/>
<text x="423.94" y="707" font-size="18.5" fill="#000" stroke="#000" stroke-width="0.35" text-anchor="middle">3h</text>
<rect x="517.33" y="673.50" width="1.5" height="10" fill="#999"/>
<text x="518.08" y="707" font-size="18.5" fill="#000" stroke="#000" stroke-width="0.35" text-anchor="middle">4h</text>
<rect x="611.48" y="673.50" width="1.5" height="10" fill="#999"/>
<text x="612.23" y="707" font-size="18.5" fill="#000" stroke="#000" stroke-width="0.35" text-anchor="middle">5h</text>
<rect x="705.62" y="673.50" width="1.5" height="10" fill="#999"/>
<text x="706.38" y="707" font-size="18.5" fill="#000" stroke="#000" stroke-width="0.35" text-anchor="middle">6h</text>
<rect x="799.77" y="673.50" width="1.5" height="10" fill="#999"/>
<text x="800.52" y="707" font-size="18.5" fill="#000" stroke="#000" stroke-width="0.35" text-anchor="middle">7h</text>
<rect x="893.92" y="673.50" width="1.5" height="10" fill="#999"/>
<text x="894.67" y="707" font-size="18.5" fill="#000" stroke="#000" stroke-width="0.35" text-anchor="middle">8h</text>
<rect x="988.06" y="673.50" width="1.5" height="10" fill="#999"/>
<text x="988.81" y="707" font-size="18.5" fill="#000" stroke="#000" stroke-width="0.35" text-anchor="middle">9h</text>
<rect x="1082.21" y="673.50" width="1.5" height="10" fill="#999"/>
<text x="1082.96" y="707" font-size="18.5" fill="#000" stroke="#000" stroke-width="0.35" text-anchor="middle">10h</text>
<rect x="1176.35" y="673.50" width="1.5" height="10" fill="#999"/>
<text x="1177.10" y="707" font-size="18.5" fill="#000" stroke="#000" stroke-width="0.35" text-anchor="middle">11h</text>
<rect x="1270.50" y="673.50" width="1.5" height="10" fill="#999"/>
<text x="1271.25" y="707" font-size="18.5" fill="#000" stroke="#000" stroke-width="0.35" text-anchor="middle">12h</text>
<rect x="1364.65" y="673.50" width="1.5" height="10" fill="#999"/>
<text x="1365.40" y="707" font-size="18.5" fill="#000" stroke="#000" stroke-width="0.35" text-anchor="middle">13h</text>
<rect x="1458.79" y="673.50" width="1.5" height="10" fill="#999"/>
<text x="1459.54" y="707" font-size="18.5" fill="#000" stroke="#000" stroke-width="0.35" text-anchor="middle">14h</text>
<rect x="1552.94" y="673.50" width="1.5" height="10" fill="#999"/>
<text x="1553.69" y="707" font-size="18.5" fill="#000" stroke="#000" stroke-width="0.35" text-anchor="middle">15h</text>
<rect x="1647.08" y="673.50" width="1.5" height="10" fill="#999"/>
<text x="1647.83" y="707" font-size="18.5" fill="#000" stroke="#000" stroke-width="0.35" text-anchor="middle">16h</text>
<rect x="1741.23" y="673.50" width="1.5" height="10" fill="#999"/>
<text x="1741.98" y="707" font-size="18.5" fill="#000" stroke="#000" stroke-width="0.35" text-anchor="middle">17h</text>
<rect x="1835.38" y="673.50" width="1.5" height="10" fill="#999"/>
<text x="1836.12" y="707" font-size="18.5" fill="#000" stroke="#000" stroke-width="0.35" text-anchor="middle">18h</text>
<rect x="1929.52" y="673.50" width="1.5" height="10" fill="#999"/>
<text x="1930.27" y="707" font-size="18.5" fill="#000" stroke="#000" stroke-width="0.35" text-anchor="middle">19h</text>
<rect x="2023.67" y="673.50" width="1.5" height="10" fill="#999"/>
<text x="2024.42" y="707" font-size="18.5" fill="#000" stroke="#000" stroke-width="0.35" text-anchor="middle">20h</text>
<rect x="2117.81" y="673.50" width="1.5" height="10" fill="#999"/>
<text x="2118.56" y="707" font-size="18.5" fill="#000" stroke="#000" stroke-width="0.35" text-anchor="middle">21h</text>
<rect x="2211.96" y="673.50" width="1.5" height="10" fill="#999"/>
<text x="2212.71" y="707" font-size="18.5" fill="#000" stroke="#000" stroke-width="0.35" text-anchor="middle">22h</text>
<rect x="2306.10" y="673.50" width="1.5" height="10" fill="#999"/>
<text x="2306.85" y="707" font-size="18.5" fill="#000" stroke="#000" stroke-width="0.35" text-anchor="middle">23h</text>
<rect x="2400.25" y="673.50" width="1.5" height="10" fill="#999"/>
<text x="2401.00" y="707" font-size="18.5" fill="#000" stroke="#000" stroke-width="0.35" text-anchor="middle">0h</text>
<text x="0" y="0" font-size="22" fill="#333" text-anchor="middle" transform="translate(85.2,370) rotate(-90)">kW</text>
<g clip-path="url(#bclip)">
<rect x="155.90" y="815.31" width="322.90" height="504.49" fill="#f0f0f0"/>
<rect x="801.70" y="815.31" width="322.90" height="504.49" fill="#f0f0f0"/>
<rect x="1447.50" y="815.31" width="322.90" height="504.49" fill="#f0f0f0"/>
<rect x="2093.30" y="815.31" width="322.90" height="504.49" fill="#f0f0f0"/>
<rect x="477.90" y="815.31" width="1.8" height="504.49" fill="#d6d6d6"/>
<rect x="800.80" y="815.31" width="1.8" height="504.49" fill="#d6d6d6"/>
<rect x="1123.70" y="815.31" width="1.8" height="504.49" fill="#d6d6d6"/>
<rect x="1446.60" y="815.31" width="1.8" height="504.49" fill="#d6d6d6"/>
<rect x="1769.50" y="815.31" width="1.8" height="504.49" fill="#d6d6d6"/>
<rect x="2092.40" y="815.31" width="1.8" height="504.49" fill="#d6d6d6"/>
<rect x="155.90" y="1247.73" width="2260.30" height="72.07" fill="#f0f0f0"/>
<rect x="155.90" y="1103.59" width="2260.30" height="72.07" fill="#f0f0f0"/>
<rect x="155.90" y="959.45" width="2260.30" height="72.07" fill="#f0f0f0"/>
<rect x="155.90" y="815.31" width="2260.30" height="72.07" fill="#f0f0f0"/>
<rect x="155.90" y="1247.13" width="2260.30" height="1.2" fill="#bababa"/>
<rect x="155.90" y="1175.06" width="2260.30" height="1.2" fill="#bababa"/>
<rect x="155.90" y="1102.99" width="2260.30" height="1.2" fill="#bababa"/>
<rect x="155.90" y="1030.92" width="2260.30" height="1.2" fill="#bababa"/>
<rect x="155.90" y="958.85" width="2260.30" height="1.2" fill="#bababa"/>
<rect x="155.90" y="886.78" width="2260.30" height="1.2" fill="#bababa"/>
<rect x="155.90" y="814.71" width="2260.30" height="1.2" fill="#bababa"/>
<path d="M155.34 1319.80 L155.34 1298.18 L156.46 1298.18 L156.46 1298.18 L157.58 1298.18 L157.58 1305.39 L158.70 1305.39 L158.70 1290.97 L159.82 1290.97 L159.82 1298.18 L160.95 1298.18 L160.95 1298.18 L162.07 1298.18 L162.07 1290.97 L163.19 1290.97 L163.19 1298.18 L164.31 1298.18 L164.31 1290.97 L165.43 1290.97 L165.43 1298.18 L166.55 1298.18 L166.55 1290.97 L167.67 1290.97 L167.67 1298.18 L168.79 1298.18 L168.79 1298.18 L169.91 1298.18 L169.91 1305.39 L171.04 1305.39 L171.04 1298.18 L172.16 1298.18 L172.16 1298.18 L173.28 1298.18 L173.28 1305.39 L174.40 1305.39 L174.40 1305.39 L175.52 1305.39 L175.52 1298.18 L176.64 1298.18 L176.64 1298.18 L177.76 1298.18 L177.76 1298.18 L178.88 1298.18 L178.88 1283.76 L180.01 1283.76 L180.01 1298.18 L181.13 1298.18 L181.13 1290.97 L182.25 1290.97 L182.25 1283.76 L183.37 1283.76 L183.37 1283.76 L184.49 1283.76 L184.49 1290.97 L185.61 1290.97 L185.61 1298.18 L186.73 1298.18 L186.73 1283.76 L187.85 1283.76 L187.85 1290.97 L188.97 1290.97 L188.97 1290.97 L190.10 1290.97 L190.10 1290.97 L191.22 1290.97 L191.22 1298.18 L192.34 1298.18 L192.34 1290.97 L193.46 1290.97 L193.46 1290.97 L194.58 1290.97 L194.58 1298.18 L195.70 1298.18 L195.70 1305.39 L196.82 1305.39 L196.82 1298.18 L197.94 1298.18 L197.94 1298.18 L199.07 1298.18 L199.07 1305.39 L200.19 1305.39 L200.19 1298.18 L201.31 1298.18 L201.31 1298.18 L202.43 1298.18 L202.43 1305.39 L203.55 1305.39 L203.55 1305.39 L204.67 1305.39 L204.67 1298.18 L205.79 1298.18 L205.79 1298.18 L206.91 1298.18 L206.91 1298.18 L208.03 1298.18 L208.03 1305.39 L209.16 1305.39 L209.16 1305.39 L210.28 1305.39 L210.28 1298.18 L211.40 1298.18 L211.40 1305.39 L212.52 1305.39 L212.52 1298.18 L213.64 1298.18 L213.64 1298.18 L214.76 1298.18 L214.76 1305.39 L215.88 1305.39 L215.88 1298.18 L217.00 1298.18 L217.00 1298.18 L218.13 1298.18 L218.13 1290.97 L219.25 1290.97 L219.25 1305.39 L220.37 1305.39 L220.37 1305.39 L221.49 1305.39 L221.49 1298.18 L222.61 1298.18 L222.61 1305.39 L223.73 1305.39 L223.73 1298.18 L224.85 1298.18 L224.85 1305.39 L225.97 1305.39 L225.97 1305.39 L227.09 1305.39 L227.09 1298.18 L228.22 1298.18 L228.22 1298.18 L229.34 1298.18 L229.34 1305.39 L230.46 1305.39 L230.46 1305.39 L231.58 1305.39 L231.58 1298.18 L232.70 1298.18 L232.70 1305.39 L233.82 1305.39 L233.82 1290.97 L234.94 1290.97 L234.94 1305.39 L236.06 1305.39 L236.06 1319.80Z M384.06 1319.80 L384.06 1305.39 L385.18 1305.39 L385.18 1305.39 L386.30 1305.39 L386.30 1305.39 L387.42 1305.39 L387.42 1305.39 L388.54 1305.39 L388.54 1305.39 L389.67 1305.39 L389.67 1298.18 L390.79 1298.18 L390.79 1298.18 L391.91 1298.18 L391.91 1305.39 L393.03 1305.39 L393.03 1298.18 L394.15 1298.18 L394.15 1305.39 L395.27 1305.39 L395.27 1305.39 L396.39 1305.39 L396.39 1298.18 L397.51 1298.18 L397.51 1298.18 L398.64 1298.18 L398.64 1305.39 L399.76 1305.39 L399.76 1305.39 L400.88 1305.39 L400.88 1298.18 L402.00 1298.18 L402.00 1298.18 L403.12 1298.18 L403.12 1298.18 L404.24 1298.18 L404.24 1305.39 L405.36 1305.39 L405.36 1305.39 L406.48 1305.39 L406.48 1298.18 L407.61 1298.18 L407.61 1305.39 L408.73 1305.39 L408.73 1305.39 L409.85 1305.39 L409.85 1305.39 L410.97 1305.39 L410.97 1298.18 L412.09 1298.18 L412.09 1305.39 L413.21 1305.39 L413.21 1298.18 L414.33 1298.18 L414.33 1290.97 L415.45 1290.97 L415.45 1305.39 L416.57 1305.39 L416.57 1305.39 L417.70 1305.39 L417.70 1298.18 L418.82 1298.18 L418.82 1305.39 L419.94 1305.39 L419.94 1298.18 L421.06 1298.18 L421.06 1298.18 L422.18 1298.18 L422.18 1298.18 L423.30 1298.18 L423.30 1290.97 L424.42 1290.97 L424.42 1290.97 L425.54 1290.97 L425.54 1298.18 L426.67 1298.18 L426.67 1290.97 L427.79 1290.97 L427.79 1298.18 L428.91 1298.18 L428.91 1290.97 L430.03 1290.97 L430.03 1298.18 L431.15 1298.18 L431.15 1290.97 L432.27 1290.97 L432.27 1298.18 L433.39 1298.18 L433.39 1298.18 L434.51 1298.18 L434.51 1298.18 L435.63 1298.18 L435.63 1298.18 L436.76 1298.18 L436.76 1298.18 L437.88 1298.18 L437.88 1298.18 L439.00 1298.18 L439.00 1290.97 L440.12 1290.97 L440.12 1290.97 L441.24 1290.97 L441.24 1290.97 L442.36 1290.97 L442.36 1290.97 L443.48 1290.97 L443.48 1283.76 L444.60 1283.76 L444.60 1298.18 L445.73 1298.18 L445.73 1290.97 L446.85 1290.97 L446.85 1305.39 L447.97 1305.39 L447.97 1298.18 L449.09 1298.18 L449.09 1290.97 L450.21 1290.97 L450.21 1298.18 L451.33 1298.18 L451.33 1298.18 L452.45 1298.18 L452.45 1298.18 L453.57 1298.18 L453.57 1298.18 L454.69 1298.18 L454.69 1298.18 L455.82 1298.18 L455.82 1298.18 L456.94 1298.18 L456.94 1298.18 L458.06 1298.18 L458.06 1305.39 L459.18 1305.39 L459.18 1298.18 L460.30 1298.18 L460.30 1290.97 L461.42 1290.97 L461.42 1298.18 L462.54 1298.18 L462.54 1298.18 L463.66 1298.18 L463.66 1298.18 L464.79 1298.18 L464.79 1298.18 L465.91 1298.18 L465.91 1298.18 L467.03 1298.18 L467.03 1298.18 L468.15 1298.18 L468.15 1298.18 L469.27 1298.18 L469.27 1298.18 L470.39 1298.18 L470.39 1298.18 L471.51 1298.18 L471.51 1298.18 L472.63 1298.18 L472.63 1298.18 L473.75 1298.18 L473.75 1298.18 L474.88 1298.18 L474.88 1298.18 L476.00 1298.18 L476.00 1298.18 L477.12 1298.18 L477.12 1298.18 L478.24 1298.18 L478.24 1298.18 L479.36 1298.18 L479.36 1298.18 L480.48 1298.18 L480.48 1298.18 L481.60 1298.18 L481.60 1290.97 L482.72 1290.97 L482.72 1298.18 L483.85 1298.18 L483.85 1298.18 L484.97 1298.18 L484.97 1298.18 L486.09 1298.18 L486.09 1305.39 L487.21 1305.39 L487.21 1305.39 L488.33 1305.39 L488.33 1298.18 L489.45 1298.18 L489.45 1305.39 L490.57 1305.39 L490.57 1290.97 L491.69 1290.97 L491.69 1305.39 L492.81 1305.39 L492.81 1298.18 L493.94 1298.18 L493.94 1298.18 L495.06 1298.18 L495.06 1298.18 L496.18 1298.18 L496.18 1290.97 L497.30 1290.97 L497.30 1298.18 L498.42 1298.18 L498.42 1298.18 L499.54 1298.18 L499.54 1305.39 L500.66 1305.39 L500.66 1298.18 L501.78 1298.18 L501.78 1298.18 L502.91 1298.18 L502.91 1290.97 L504.03 1290.97 L504.03 1298.18 L505.15 1298.18 L505.15 1298.18 L506.27 1298.18 L506.27 1298.18 L507.39 1298.18 L507.39 1298.18 L508.51 1298.18 L508.51 1298.18 L509.63 1298.18 L509.63 1290.97 L510.75 1290.97 L510.75 1298.18 L511.87 1298.18 L511.87 1298.18 L513.00 1298.18 L513.00 1298.18 L514.12 1298.18 L514.12 1290.97 L515.24 1290.97 L515.24 1298.18 L516.36 1298.18 L516.36 1298.18 L517.48 1298.18 L517.48 1305.39 L518.60 1305.39 L518.60 1298.18 L519.72 1298.18 L519.72 1298.18 L520.84 1298.18 L520.84 1305.39 L521.97 1305.39 L521.97 1298.18 L523.09 1298.18 L523.09 1298.18 L524.21 1298.18 L524.21 1298.18 L525.33 1298.18 L525.33 1305.39 L526.45 1305.39 L526.45 1298.18 L527.57 1298.18 L527.57 1298.18 L528.69 1298.18 L528.69 1298.18 L529.81 1298.18 L529.81 1305.39 L530.93 1305.39 L530.93 1290.97 L532.06 1290.97 L532.06 1305.39 L533.18 1305.39 L533.18 1298.18 L534.30 1298.18 L534.30 1298.18 L535.42 1298.18 L535.42 1305.39 L536.54 1305.39 L536.54 1298.18 L537.66 1298.18 L537.66 1298.18 L538.78 1298.18 L538.78 1298.18 L539.90 1298.18 L539.90 1290.97 L541.03 1290.97 L541.03 1305.39 L542.15 1305.39 L542.15 1298.18 L543.27 1298.18 L543.27 1298.18 L544.39 1298.18 L544.39 1298.18 L545.51 1298.18 L545.51 1305.39 L546.63 1305.39 L546.63 1305.39 L547.75 1305.39 L547.75 1298.18 L548.87 1298.18 L548.87 1298.18 L549.99 1298.18 L549.99 1305.39 L551.12 1305.39 L551.12 1298.18 L552.24 1298.18 L552.24 1290.97 L553.36 1290.97 L553.36 1290.97 L554.48 1290.97 L554.48 1290.97 L555.60 1290.97 L555.60 1290.97 L556.72 1290.97 L556.72 1290.97 L557.84 1290.97 L557.84 1290.97 L558.96 1290.97 L558.96 1319.80Z M706.96 1319.80 L706.96 1254.94 L708.08 1254.94 L708.08 1254.94 L709.20 1254.94 L709.20 1254.94 L710.32 1254.94 L710.32 1247.73 L711.44 1247.73 L711.44 1247.73 L712.57 1247.73 L712.57 1247.73 L713.69 1247.73 L713.69 1247.73 L714.81 1247.73 L714.81 1262.14 L715.93 1262.14 L715.93 1247.73 L717.05 1247.73 L717.05 1247.73 L718.17 1247.73 L718.17 1254.94 L719.29 1254.94 L719.29 1254.94 L720.41 1254.94 L720.41 1254.94 L721.54 1254.94 L721.54 1247.73 L722.66 1247.73 L722.66 1305.39 L723.78 1305.39 L723.78 1312.59 L724.90 1312.59 L724.90 1312.59 L726.02 1312.59 L726.02 1312.59 L727.14 1312.59 L727.14 1312.59 L728.26 1312.59 L728.26 1298.18 L729.38 1298.18 L729.38 1298.18 L730.51 1298.18 L730.51 1312.59 L731.63 1312.59 L731.63 1298.18 L732.75 1298.18 L732.75 1312.59 L733.87 1312.59 L733.87 1312.59 L734.99 1312.59 L734.99 1312.59 L736.11 1312.59 L736.11 1312.59 L737.23 1312.59 L737.23 1312.59 L738.35 1312.59 L738.35 1312.59 L739.47 1312.59 L739.47 1312.59 L740.60 1312.59 L740.60 1312.59 L741.72 1312.59 L741.72 1305.39 L742.84 1305.39 L742.84 1305.39 L743.96 1305.39 L743.96 1305.39 L745.08 1305.39 L745.08 1305.39 L746.20 1305.39 L746.20 1305.39 L747.32 1305.39 L747.32 1305.39 L748.44 1305.39 L748.44 1312.59 L749.57 1312.59 L749.57 1312.59 L750.69 1312.59 L750.69 1305.39 L751.81 1305.39 L751.81 1312.59 L752.93 1312.59 L752.93 1305.39 L754.05 1305.39 L754.05 1305.39 L755.17 1305.39 L755.17 1312.59 L756.29 1312.59 L756.29 1305.39 L757.41 1305.39 L757.41 1305.39 L758.53 1305.39 L758.53 1305.39 L759.66 1305.39 L759.66 1305.39 L760.78 1305.39 L760.78 1305.39 L761.90 1305.39 L761.90 1312.59 L763.02 1312.59 L763.02 1305.39 L764.14 1305.39 L764.14 1298.18 L765.26 1298.18 L765.26 1305.39 L766.38 1305.39 L766.38 1305.39 L767.50 1305.39 L767.50 1305.39 L768.63 1305.39 L768.63 1305.39 L769.75 1305.39 L769.75 1305.39 L770.87 1305.39 L770.87 1305.39 L771.99 1305.39 L771.99 1305.39 L773.11 1305.39 L773.11 1312.59 L774.23 1312.59 L774.23 1312.59 L775.35 1312.59 L775.35 1312.59 L776.47 1312.59 L776.47 1312.59 L777.59 1312.59 L777.59 1312.59 L778.72 1312.59 L778.72 1305.39 L779.84 1305.39 L779.84 1305.39 L780.96 1305.39 L780.96 1305.39 L782.08 1305.39 L782.08 1305.39 L783.20 1305.39 L783.20 1305.39 L784.32 1305.39 L784.32 1298.18 L785.44 1298.18 L785.44 1312.59 L786.56 1312.59 L786.56 1305.39 L787.69 1305.39 L787.69 1305.39 L788.81 1305.39 L788.81 1298.18 L789.93 1298.18 L789.93 1305.39 L791.05 1305.39 L791.05 1305.39 L792.17 1305.39 L792.17 1312.59 L793.29 1312.59 L793.29 1305.39 L794.41 1305.39 L794.41 1312.59 L795.53 1312.59 L795.53 1312.59 L796.65 1312.59 L796.65 1312.59 L797.78 1312.59 L797.78 1305.39 L798.90 1305.39 L798.90 1312.59 L800.02 1312.59 L800.02 1305.39 L801.14 1305.39 L801.14 1305.39 L802.26 1305.39 L802.26 1305.39 L803.38 1305.39 L803.38 1305.39 L804.50 1305.39 L804.50 1305.39 L805.62 1305.39 L805.62 1305.39 L806.75 1305.39 L806.75 1305.39 L807.87 1305.39 L807.87 1305.39 L808.99 1305.39 L808.99 1305.39 L810.11 1305.39 L810.11 1298.18 L811.23 1298.18 L811.23 1305.39 L812.35 1305.39 L812.35 1305.39 L813.47 1305.39 L813.47 1305.39 L814.59 1305.39 L814.59 1305.39 L815.71 1305.39 L815.71 1305.39 L816.84 1305.39 L816.84 1298.18 L817.96 1298.18 L817.96 1298.18 L819.08 1298.18 L819.08 1305.39 L820.20 1305.39 L820.20 1305.39 L821.32 1305.39 L821.32 1305.39 L822.44 1305.39 L822.44 1305.39 L823.56 1305.39 L823.56 1305.39 L824.68 1305.39 L824.68 1305.39 L825.81 1305.39 L825.81 1305.39 L826.93 1305.39 L826.93 1305.39 L828.05 1305.39 L828.05 1298.18 L829.17 1298.18 L829.17 1305.39 L830.29 1305.39 L830.29 1305.39 L831.41 1305.39 L831.41 1305.39 L832.53 1305.39 L832.53 1305.39 L833.65 1305.39 L833.65 1298.18 L834.77 1298.18 L834.77 1305.39 L835.90 1305.39 L835.90 1305.39 L837.02 1305.39 L837.02 1305.39 L838.14 1305.39 L838.14 1305.39 L839.26 1305.39 L839.26 1305.39 L840.38 1305.39 L840.38 1305.39 L841.50 1305.39 L841.50 1305.39 L842.62 1305.39 L842.62 1305.39 L843.74 1305.39 L843.74 1290.97 L844.87 1290.97 L844.87 1290.97 L845.99 1290.97 L845.99 1290.97 L847.11 1290.97 L847.11 1290.97 L848.23 1290.97 L848.23 1290.97 L849.35 1290.97 L849.35 1290.97 L850.47 1290.97 L850.47 1290.97 L851.59 1290.97 L851.59 1290.97 L852.71 1290.97 L852.71 1305.39 L853.83 1305.39 L853.83 1305.39 L854.96 1305.39 L854.96 1305.39 L856.08 1305.39 L856.08 1305.39 L857.20 1305.39 L857.20 1305.39 L858.32 1305.39 L858.32 1305.39 L859.44 1305.39 L859.44 1305.39 L860.56 1305.39 L860.56 1305.39 L861.68 1305.39 L861.68 1305.39 L862.80 1305.39 L862.80 1305.39 L863.93 1305.39 L863.93 1305.39 L865.05 1305.39 L865.05 1305.39 L866.17 1305.39 L866.17 1298.18 L867.29 1298.18 L867.29 1298.18 L868.41 1298.18 L868.41 1298.18 L869.53 1298.18 L869.53 1298.18 L870.65 1298.18 L870.65 1298.18 L871.77 1298.18 L871.77 1298.18 L872.89 1298.18 L872.89 1298.18 L874.02 1298.18 L874.02 1298.18 L875.14 1298.18 L875.14 1305.39 L876.26 1305.39 L876.26 1298.18 L877.38 1298.18 L877.38 1305.39 L878.50 1305.39 L878.50 1305.39 L879.62 1305.39 L879.62 1298.18 L880.74 1298.18 L880.74 1305.39 L881.86 1305.39 L881.86 1319.80Z M1029.86 1319.80 L1029.86 1312.59 L1030.98 1312.59 L1030.98 1312.59 L1032.10 1312.59 L1032.10 1312.59 L1033.22 1312.59 L1033.22 1312.59 L1034.34 1312.59 L1034.34 1312.59 L1035.47 1312.59 L1035.47 1312.59 L1036.59 1312.59 L1036.59 1312.59 L1037.71 1312.59 L1037.71 1312.59 L1038.83 1312.59 L1038.83 1312.59 L1039.95 1312.59 L1039.95 1312.59 L1041.07 1312.59 L1041.07 1312.59 L1042.19 1312.59 L1042.19 1312.59 L1043.31 1312.59 L1043.31 1312.59 L1044.44 1312.59 L1044.44 1312.59 L1045.56 1312.59 L1045.56 1312.59 L1046.68 1312.59 L1046.68 1312.59 L1047.80 1312.59 L1047.80 1312.59 L1048.92 1312.59 L1048.92 1312.59 L1050.04 1312.59 L1050.04 1312.59 L1051.16 1312.59 L1051.16 1312.59 L1052.28 1312.59 L1052.28 1312.59 L1053.41 1312.59 L1053.41 1312.59 L1054.53 1312.59 L1054.53 1312.59 L1055.65 1312.59 L1055.65 1312.59 L1056.77 1312.59 L1056.77 1312.59 L1057.89 1312.59 L1057.89 1312.59 L1059.01 1312.59 L1059.01 1312.59 L1060.13 1312.59 L1060.13 1312.59 L1061.25 1312.59 L1061.25 1312.59 L1062.37 1312.59 L1062.37 1312.59 L1063.50 1312.59 L1063.50 1312.59 L1064.62 1312.59 L1064.62 1312.59 L1065.74 1312.59 L1065.74 1312.59 L1066.86 1312.59 L1066.86 1312.59 L1067.98 1312.59 L1067.98 1312.59 L1069.10 1312.59 L1069.10 1312.59 L1070.22 1312.59 L1070.22 1305.39 L1071.34 1305.39 L1071.34 1305.39 L1072.47 1305.39 L1072.47 1305.39 L1073.59 1305.39 L1073.59 1305.39 L1074.71 1305.39 L1074.71 1312.59 L1075.83 1312.59 L1075.83 1305.39 L1076.95 1305.39 L1076.95 1305.39 L1078.07 1305.39 L1078.07 1312.59 L1079.19 1312.59 L1079.19 1312.59 L1080.31 1312.59 L1080.31 1305.39 L1081.43 1305.39 L1081.43 1305.39 L1082.56 1305.39 L1082.56 1305.39 L1083.68 1305.39 L1083.68 1305.39 L1084.80 1305.39 L1084.80 1305.39 L1085.92 1305.39 L1085.92 1312.59 L1087.04 1312.59 L1087.04 1312.59 L1088.16 1312.59 L1088.16 1312.59 L1089.28 1312.59 L1089.28 1298.18 L1090.40 1298.18 L1090.40 1305.39 L1091.53 1305.39 L1091.53 1312.59 L1092.65 1312.59 L1092.65 1312.59 L1093.77 1312.59 L1093.77 1305.39 L1094.89 1305.39 L1094.89 1312.59 L1096.01 1312.59 L1096.01 1298.18 L1097.13 1298.18 L1097.13 1305.39 L1098.25 1305.39 L1098.25 1312.59 L1099.37 1312.59 L1099.37 1312.59 L1100.49 1312.59 L1100.49 1312.59 L1101.62 1312.59 L1101.62 1312.59 L1102.74 1312.59 L1102.74 1305.39 L1103.86 1305.39 L1103.86 1305.39 L1104.98 1305.39 L1104.98 1305.39 L1106.10 1305.39 L1106.10 1305.39 L1107.22 1305.39 L1107.22 1312.59 L1108.34 1312.59 L1108.34 1312.59 L1109.46 1312.59 L1109.46 1312.59 L1110.59 1312.59 L1110.59 1312.59 L1111.71 1312.59 L1111.71 1312.59 L1112.83 1312.59 L1112.83 1305.39 L1113.95 1305.39 L1113.95 1305.39 L1115.07 1305.39 L1115.07 1305.39 L1116.19 1305.39 L1116.19 1312.59 L1117.31 1312.59 L1117.31 1305.39 L1118.43 1305.39 L1118.43 1312.59 L1119.55 1312.59 L1119.55 1312.59 L1120.68 1312.59 L1120.68 1305.39 L1121.80 1305.39 L1121.80 1305.39 L1122.92 1305.39 L1122.92 1305.39 L1124.04 1305.39 L1124.04 1305.39 L1125.16 1305.39 L1125.16 1305.39 L1126.28 1305.39 L1126.28 1312.59 L1127.40 1312.59 L1127.40 1312.59 L1128.52 1312.59 L1128.52 1305.39 L1129.65 1305.39 L1129.65 1290.97 L1130.77 1290.97 L1130.77 1290.97 L1131.89 1290.97 L1131.89 1290.97 L1133.01 1290.97 L1133.01 1305.39 L1134.13 1305.39 L1134.13 1305.39 L1135.25 1305.39 L1135.25 1298.18 L1136.37 1298.18 L1136.37 1305.39 L1137.49 1305.39 L1137.49 1312.59 L1138.61 1312.59 L1138.61 1305.39 L1139.74 1305.39 L1139.74 1305.39 L1140.86 1305.39 L1140.86 1305.39 L1141.98 1305.39 L1141.98 1305.39 L1143.10 1305.39 L1143.10 1305.39 L1144.22 1305.39 L1144.22 1305.39 L1145.34 1305.39 L1145.34 1298.18 L1146.46 1298.18 L1146.46 1298.18 L1147.58 1298.18 L1147.58 1305.39 L1148.71 1305.39 L1148.71 1305.39 L1149.83 1305.39 L1149.83 1305.39 L1150.95 1305.39 L1150.95 1312.59 L1152.07 1312.59 L1152.07 1305.39 L1153.19 1305.39 L1153.19 1305.39 L1154.31 1305.39 L1154.31 1305.39 L1155.43 1305.39 L1155.43 1305.39 L1156.55 1305.39 L1156.55 1305.39 L1157.67 1305.39 L1157.67 1305.39 L1158.80 1305.39 L1158.80 1298.18 L1159.92 1298.18 L1159.92 1312.59 L1161.04 1312.59 L1161.04 1305.39 L1162.16 1305.39 L1162.16 1305.39 L1163.28 1305.39 L1163.28 1305.39 L1164.40 1305.39 L1164.40 1298.18 L1165.52 1298.18 L1165.52 1305.39 L1166.64 1305.39 L1166.64 1305.39 L1167.77 1305.39 L1167.77 1305.39 L1168.89 1305.39 L1168.89 1298.18 L1170.01 1298.18 L1170.01 1305.39 L1171.13 1305.39 L1171.13 1305.39 L1172.25 1305.39 L1172.25 1305.39 L1173.37 1305.39 L1173.37 1298.18 L1174.49 1298.18 L1174.49 1298.18 L1175.61 1298.18 L1175.61 1305.39 L1176.73 1305.39 L1176.73 1305.39 L1177.86 1305.39 L1177.86 1305.39 L1178.98 1305.39 L1178.98 1305.39 L1180.10 1305.39 L1180.10 1298.18 L1181.22 1298.18 L1181.22 1298.18 L1182.34 1298.18 L1182.34 1305.39 L1183.46 1305.39 L1183.46 1305.39 L1184.58 1305.39 L1184.58 1305.39 L1185.70 1305.39 L1185.70 1312.59 L1186.83 1312.59 L1186.83 1305.39 L1187.95 1305.39 L1187.95 1298.18 L1189.07 1298.18 L1189.07 1305.39 L1190.19 1305.39 L1190.19 1312.59 L1191.31 1312.59 L1191.31 1312.59 L1192.43 1312.59 L1192.43 1312.59 L1193.55 1312.59 L1193.55 1305.39 L1194.67 1305.39 L1194.67 1305.39 L1195.79 1305.39 L1195.79 1305.39 L1196.92 1305.39 L1196.92 1305.39 L1198.04 1305.39 L1198.04 1305.39 L1199.16 1305.39 L1199.16 1305.39 L1200.28 1305.39 L1200.28 1305.39 L1201.40 1305.39 L1201.40 1298.18 L1202.52 1298.18 L1202.52 1305.39 L1203.64 1305.39 L1203.64 1305.39 L1204.76 1305.39 L1204.76 1319.80Z M1352.76 1319.80 L1352.76 1247.73 L1353.88 1247.73 L1353.88 1254.94 L1355.00 1254.94 L1355.00 1254.94 L1356.12 1254.94 L1356.12 1254.94 L1357.24 1254.94 L1357.24 1247.73 L1358.37 1247.73 L1358.37 1312.59 L1359.49 1312.59 L1359.49 1312.59 L1360.61 1312.59 L1360.61 1305.39 L1361.73 1305.39 L1361.73 1305.39 L1362.85 1305.39 L1362.85 1305.39 L1363.97 1305.39 L1363.97 1298.18 L1365.09 1298.18 L1365.09 1305.39 L1366.21 1305.39 L1366.21 1305.39 L1367.34 1305.39 L1367.34 1305.39 L1368.46 1305.39 L1368.46 1305.39 L1369.58 1305.39 L1369.58 1305.39 L1370.70 1305.39 L1370.70 1305.39 L1371.82 1305.39 L1371.82 1312.59 L1372.94 1312.59 L1372.94 1305.39 L1374.06 1305.39 L1374.06 1298.18 L1375.18 1298.18 L1375.18 1305.39 L1376.31 1305.39 L1376.31 1305.39 L1377.43 1305.39 L1377.43 1305.39 L1378.55 1305.39 L1378.55 1312.59 L1379.67 1312.59 L1379.67 1298.18 L1380.79 1298.18 L1380.79 1298.18 L1381.91 1298.18 L1381.91 1312.59 L1383.03 1312.59 L1383.03 1305.39 L1384.15 1305.39 L1384.15 1305.39 L1385.27 1305.39 L1385.27 1298.18 L1386.40 1298.18 L1386.40 1305.39 L1387.52 1305.39 L1387.52 1305.39 L1388.64 1305.39 L1388.64 1305.39 L1389.76 1305.39 L1389.76 1298.18 L1390.88 1298.18 L1390.88 1305.39 L1392.00 1305.39 L1392.00 1305.39 L1393.12 1305.39 L1393.12 1305.39 L1394.24 1305.39 L1394.24 1312.59 L1395.37 1312.59 L1395.37 1305.39 L1396.49 1305.39 L1396.49 1305.39 L1397.61 1305.39 L1397.61 1305.39 L1398.73 1305.39 L1398.73 1305.39 L1399.85 1305.39 L1399.85 1312.59 L1400.97 1312.59 L1400.97 1298.18 L1402.09 1298.18 L1402.09 1312.59 L1403.21 1312.59 L1403.21 1312.59 L1404.33 1312.59 L1404.33 1305.39 L1405.46 1305.39 L1405.46 1305.39 L1406.58 1305.39 L1406.58 1305.39 L1407.70 1305.39 L1407.70 1305.39 L1408.82 1305.39 L1408.82 1305.39 L1409.94 1305.39 L1409.94 1305.39 L1411.06 1305.39 L1411.06 1298.18 L1412.18 1298.18 L1412.18 1305.39 L1413.30 1305.39 L1413.30 1305.39 L1414.43 1305.39 L1414.43 1312.59 L1415.55 1312.59 L1415.55 1305.39 L1416.67 1305.39 L1416.67 1305.39 L1417.79 1305.39 L1417.79 1298.18 L1418.91 1298.18 L1418.91 1305.39 L1420.03 1305.39 L1420.03 1312.59 L1421.15 1312.59 L1421.15 1298.18 L1422.27 1298.18 L1422.27 1298.18 L1423.39 1298.18 L1423.39 1305.39 L1424.52 1305.39 L1424.52 1305.39 L1425.64 1305.39 L1425.64 1298.18 L1426.76 1298.18 L1426.76 1312.59 L1427.88 1312.59 L1427.88 1298.18 L1429.00 1298.18 L1429.00 1305.39 L1430.12 1305.39 L1430.12 1312.59 L1431.24 1312.59 L1431.24 1298.18 L1432.36 1298.18 L1432.36 1298.18 L1433.49 1298.18 L1433.49 1305.39 L1434.61 1305.39 L1434.61 1305.39 L1435.73 1305.39 L1435.73 1312.59 L1436.85 1312.59 L1436.85 1312.59 L1437.97 1312.59 L1437.97 1305.39 L1439.09 1305.39 L1439.09 1305.39 L1440.21 1305.39 L1440.21 1305.39 L1441.33 1305.39 L1441.33 1312.59 L1442.45 1312.59 L1442.45 1312.59 L1443.58 1312.59 L1443.58 1305.39 L1444.70 1305.39 L1444.70 1305.39 L1445.82 1305.39 L1445.82 1298.18 L1446.94 1298.18 L1446.94 1298.18 L1448.06 1298.18 L1448.06 1305.39 L1449.18 1305.39 L1449.18 1298.18 L1450.30 1298.18 L1450.30 1305.39 L1451.42 1305.39 L1451.42 1298.18 L1452.55 1298.18 L1452.55 1298.18 L1453.67 1298.18 L1453.67 1305.39 L1454.79 1305.39 L1454.79 1305.39 L1455.91 1305.39 L1455.91 1298.18 L1457.03 1298.18 L1457.03 1298.18 L1458.15 1298.18 L1458.15 1305.39 L1459.27 1305.39 L1459.27 1298.18 L1460.39 1298.18 L1460.39 1312.59 L1461.51 1312.59 L1461.51 1305.39 L1462.64 1305.39 L1462.64 1298.18 L1463.76 1298.18 L1463.76 1305.39 L1464.88 1305.39 L1464.88 1298.18 L1466.00 1298.18 L1466.00 1305.39 L1467.12 1305.39 L1467.12 1305.39 L1468.24 1305.39 L1468.24 1298.18 L1469.36 1298.18 L1469.36 1312.59 L1470.48 1312.59 L1470.48 1305.39 L1471.61 1305.39 L1471.61 1305.39 L1472.73 1305.39 L1472.73 1305.39 L1473.85 1305.39 L1473.85 1312.59 L1474.97 1312.59 L1474.97 1305.39 L1476.09 1305.39 L1476.09 1298.18 L1477.21 1298.18 L1477.21 1305.39 L1478.33 1305.39 L1478.33 1312.59 L1479.45 1312.59 L1479.45 1298.18 L1480.57 1298.18 L1480.57 1305.39 L1481.70 1305.39 L1481.70 1305.39 L1482.82 1305.39 L1482.82 1312.59 L1483.94 1312.59 L1483.94 1305.39 L1485.06 1305.39 L1485.06 1305.39 L1486.18 1305.39 L1486.18 1305.39 L1487.30 1305.39 L1487.30 1298.18 L1488.42 1298.18 L1488.42 1312.59 L1489.54 1312.59 L1489.54 1305.39 L1490.67 1305.39 L1490.67 1305.39 L1491.79 1305.39 L1491.79 1305.39 L1492.91 1305.39 L1492.91 1312.59 L1494.03 1312.59 L1494.03 1305.39 L1495.15 1305.39 L1495.15 1298.18 L1496.27 1298.18 L1496.27 1305.39 L1497.39 1305.39 L1497.39 1305.39 L1498.51 1305.39 L1498.51 1305.39 L1499.63 1305.39 L1499.63 1298.18 L1500.76 1298.18 L1500.76 1305.39 L1501.88 1305.39 L1501.88 1298.18 L1503.00 1298.18 L1503.00 1298.18 L1504.12 1298.18 L1504.12 1305.39 L1505.24 1305.39 L1505.24 1305.39 L1506.36 1305.39 L1506.36 1298.18 L1507.48 1298.18 L1507.48 1298.18 L1508.60 1298.18 L1508.60 1298.18 L1509.73 1298.18 L1509.73 1305.39 L1510.85 1305.39 L1510.85 1298.18 L1511.97 1298.18 L1511.97 1312.59 L1513.09 1312.59 L1513.09 1298.18 L1514.21 1298.18 L1514.21 1305.39 L1515.33 1305.39 L1515.33 1305.39 L1516.45 1305.39 L1516.45 1312.59 L1517.57 1312.59 L1517.57 1305.39 L1518.69 1305.39 L1518.69 1305.39 L1519.82 1305.39 L1519.82 1312.59 L1520.94 1312.59 L1520.94 1298.18 L1522.06 1298.18 L1522.06 1290.97 L1523.18 1290.97 L1523.18 1298.18 L1524.30 1298.18 L1524.30 1298.18 L1525.42 1298.18 L1525.42 1298.18 L1526.54 1298.18 L1526.54 1290.97 L1527.66 1290.97 L1527.66 1319.80Z M1675.66 1319.80 L1675.66 1262.14 L1676.78 1262.14 L1676.78 1262.14 L1677.90 1262.14 L1677.90 1254.94 L1679.02 1254.94 L1679.02 1262.14 L1680.14 1262.14 L1680.14 1262.14 L1681.27 1262.14 L1681.27 1254.94 L1682.39 1254.94 L1682.39 1262.14 L1683.51 1262.14 L1683.51 1254.94 L1684.63 1254.94 L1684.63 1262.14 L1685.75 1262.14 L1685.75 1262.14 L1686.87 1262.14 L1686.87 1254.94 L1687.99 1254.94 L1687.99 1262.14 L1689.11 1262.14 L1689.11 1254.94 L1690.24 1254.94 L1690.24 1254.94 L1691.36 1254.94 L1691.36 1262.14 L1692.48 1262.14 L1692.48 1262.14 L1693.60 1262.14 L1693.60 1269.35 L1694.72 1269.35 L1694.72 1262.14 L1695.84 1262.14 L1695.84 1269.35 L1696.96 1269.35 L1696.96 1269.35 L1698.08 1269.35 L1698.08 1269.35 L1699.21 1269.35 L1699.21 1269.35 L1700.33 1269.35 L1700.33 1269.35 L1701.45 1269.35 L1701.45 1262.14 L1702.57 1262.14 L1702.57 1305.39 L1703.69 1305.39 L1703.69 1305.39 L1704.81 1305.39 L1704.81 1312.59 L1705.93 1312.59 L1705.93 1305.39 L1707.05 1305.39 L1707.05 1312.59 L1708.17 1312.59 L1708.17 1312.59 L1709.30 1312.59 L1709.30 1305.39 L1710.42 1305.39 L1710.42 1305.39 L1711.54 1305.39 L1711.54 1312.59 L1712.66 1312.59 L1712.66 1305.39 L1713.78 1305.39 L1713.78 1305.39 L1714.90 1305.39 L1714.90 1305.39 L1716.02 1305.39 L1716.02 1305.39 L1717.14 1305.39 L1717.14 1305.39 L1718.27 1305.39 L1718.27 1305.39 L1719.39 1305.39 L1719.39 1312.59 L1720.51 1312.59 L1720.51 1312.59 L1721.63 1312.59 L1721.63 1305.39 L1722.75 1305.39 L1722.75 1312.59 L1723.87 1312.59 L1723.87 1305.39 L1724.99 1305.39 L1724.99 1305.39 L1726.11 1305.39 L1726.11 1312.59 L1727.23 1312.59 L1727.23 1305.39 L1728.36 1305.39 L1728.36 1305.39 L1729.48 1305.39 L1729.48 1305.39 L1730.60 1305.39 L1730.60 1312.59 L1731.72 1312.59 L1731.72 1312.59 L1732.84 1312.59 L1732.84 1312.59 L1733.96 1312.59 L1733.96 1305.39 L1735.08 1305.39 L1735.08 1305.39 L1736.20 1305.39 L1736.20 1305.39 L1737.33 1305.39 L1737.33 1312.59 L1738.45 1312.59 L1738.45 1312.59 L1739.57 1312.59 L1739.57 1305.39 L1740.69 1305.39 L1740.69 1312.59 L1741.81 1312.59 L1741.81 1305.39 L1742.93 1305.39 L1742.93 1312.59 L1744.05 1312.59 L1744.05 1312.59 L1745.17 1312.59 L1745.17 1305.39 L1746.29 1305.39 L1746.29 1312.59 L1747.42 1312.59 L1747.42 1305.39 L1748.54 1305.39 L1748.54 1312.59 L1749.66 1312.59 L1749.66 1305.39 L1750.78 1305.39 L1750.78 1305.39 L1751.90 1305.39 L1751.90 1305.39 L1753.02 1305.39 L1753.02 1312.59 L1754.14 1312.59 L1754.14 1305.39 L1755.26 1305.39 L1755.26 1312.59 L1756.39 1312.59 L1756.39 1312.59 L1757.51 1312.59 L1757.51 1305.39 L1758.63 1305.39 L1758.63 1305.39 L1759.75 1305.39 L1759.75 1312.59 L1760.87 1312.59 L1760.87 1312.59 L1761.99 1312.59 L1761.99 1312.59 L1763.11 1312.59 L1763.11 1312.59 L1764.23 1312.59 L1764.23 1305.39 L1765.35 1305.39 L1765.35 1305.39 L1766.48 1305.39 L1766.48 1305.39 L1767.60 1305.39 L1767.60 1305.39 L1768.72 1305.39 L1768.72 1312.59 L1769.84 1312.59 L1769.84 1312.59 L1770.96 1312.59 L1770.96 1312.59 L1772.08 1312.59 L1772.08 1298.18 L1773.20 1298.18 L1773.20 1312.59 L1774.32 1312.59 L1774.32 1312.59 L1775.45 1312.59 L1775.45 1305.39 L1776.57 1305.39 L1776.57 1312.59 L1777.69 1312.59 L1777.69 1305.39 L1778.81 1305.39 L1778.81 1305.39 L1779.93 1305.39 L1779.93 1305.39 L1781.05 1305.39 L1781.05 1305.39 L1782.17 1305.39 L1782.17 1305.39 L1783.29 1305.39 L1783.29 1305.39 L1784.41 1305.39 L1784.41 1312.59 L1785.54 1312.59 L1785.54 1312.59 L1786.66 1312.59 L1786.66 1312.59 L1787.78 1312.59 L1787.78 1312.59 L1788.90 1312.59 L1788.90 1305.39 L1790.02 1305.39 L1790.02 1305.39 L1791.14 1305.39 L1791.14 1305.39 L1792.26 1305.39 L1792.26 1312.59 L1793.38 1312.59 L1793.38 1305.39 L1794.51 1305.39 L1794.51 1305.39 L1795.63 1305.39 L1795.63 1312.59 L1796.75 1312.59 L1796.75 1312.59 L1797.87 1312.59 L1797.87 1305.39 L1798.99 1305.39 L1798.99 1312.59 L1800.11 1312.59 L1800.11 1298.18 L1801.23 1298.18 L1801.23 1305.39 L1802.35 1305.39 L1802.35 1305.39 L1803.47 1305.39 L1803.47 1312.59 L1804.60 1312.59 L1804.60 1312.59 L1805.72 1312.59 L1805.72 1312.59 L1806.84 1312.59 L1806.84 1305.39 L1807.96 1305.39 L1807.96 1312.59 L1809.08 1312.59 L1809.08 1305.39 L1810.20 1305.39 L1810.20 1305.39 L1811.32 1305.39 L1811.32 1312.59 L1812.44 1312.59 L1812.44 1312.59 L1813.57 1312.59 L1813.57 1312.59 L1814.69 1312.59 L1814.69 1312.59 L1815.81 1312.59 L1815.81 1312.59 L1816.93 1312.59 L1816.93 1305.39 L1818.05 1305.39 L1818.05 1312.59 L1819.17 1312.59 L1819.17 1312.59 L1820.29 1312.59 L1820.29 1312.59 L1821.41 1312.59 L1821.41 1305.39 L1822.53 1305.39 L1822.53 1312.59 L1823.66 1312.59 L1823.66 1305.39 L1824.78 1305.39 L1824.78 1305.39 L1825.90 1305.39 L1825.90 1305.39 L1827.02 1305.39 L1827.02 1312.59 L1828.14 1312.59 L1828.14 1305.39 L1829.26 1305.39 L1829.26 1312.59 L1830.38 1312.59 L1830.38 1305.39 L1831.50 1305.39 L1831.50 1305.39 L1832.63 1305.39 L1832.63 1305.39 L1833.75 1305.39 L1833.75 1312.59 L1834.87 1312.59 L1834.87 1305.39 L1835.99 1305.39 L1835.99 1305.39 L1837.11 1305.39 L1837.11 1305.39 L1838.23 1305.39 L1838.23 1305.39 L1839.35 1305.39 L1839.35 1312.59 L1840.47 1312.59 L1840.47 1312.59 L1841.59 1312.59 L1841.59 1312.59 L1842.72 1312.59 L1842.72 1312.59 L1843.84 1312.59 L1843.84 1305.39 L1844.96 1305.39 L1844.96 1305.39 L1846.08 1305.39 L1846.08 1305.39 L1847.20 1305.39 L1847.20 1312.59 L1848.32 1312.59 L1848.32 1312.59 L1849.44 1312.59 L1849.44 1312.59 L1850.56 1312.59 L1850.56 1305.39 L1851.69 1305.39 L1851.69 1312.59 L1852.81 1312.59 L1852.81 1312.59 L1853.93 1312.59 L1853.93 1312.59 L1855.05 1312.59 L1855.05 1305.39 L1856.17 1305.39 L1856.17 1305.39 L1857.29 1305.39 L1857.29 1305.39 L1858.41 1305.39 L1858.41 1305.39 L1859.53 1305.39 L1859.53 1312.59 L1860.66 1312.59 L1860.66 1312.59 L1861.78 1312.59 L1861.78 1312.59 L1862.90 1312.59 L1862.90 1312.59 L1864.02 1312.59 L1864.02 1312.59 L1865.14 1312.59 L1865.14 1305.39 L1866.26 1305.39 L1866.26 1305.39 L1867.38 1305.39 L1867.38 1305.39 L1868.50 1305.39 L1868.50 1312.59 L1869.62 1312.59 L1869.62 1305.39 L1870.75 1305.39 L1870.75 1305.39 L1871.87 1305.39 L1871.87 1305.39 L1872.99 1305.39 L1872.99 1305.39 L1874.11 1305.39 L1874.11 1305.39 L1875.23 1305.39 L1875.23 1305.39 L1876.35 1305.39 L1876.35 1312.59 L1877.47 1312.59 L1877.47 1305.39 L1878.59 1305.39 L1878.59 1305.39 L1879.72 1305.39 L1879.72 1312.59 L1880.84 1312.59 L1880.84 1305.39 L1881.96 1305.39 L1881.96 1312.59 L1883.08 1312.59 L1883.08 1305.39 L1884.20 1305.39 L1884.20 1305.39 L1885.32 1305.39 L1885.32 1305.39 L1886.44 1305.39 L1886.44 1305.39 L1887.56 1305.39 L1887.56 1312.59 L1888.68 1312.59 L1888.68 1305.39 L1889.81 1305.39 L1889.81 1312.59 L1890.93 1312.59 L1890.93 1305.39 L1892.05 1305.39 L1892.05 1305.39 L1893.17 1305.39 L1893.17 1312.59 L1894.29 1312.59 L1894.29 1305.39 L1895.41 1305.39 L1895.41 1312.59 L1896.53 1312.59 L1896.53 1305.39 L1897.65 1305.39 L1897.65 1298.18 L1898.78 1298.18 L1898.78 1305.39 L1899.90 1305.39 L1899.90 1312.59 L1901.02 1312.59 L1901.02 1312.59 L1902.14 1312.59 L1902.14 1298.18 L1903.26 1298.18 L1903.26 1305.39 L1904.38 1305.39 L1904.38 1305.39 L1905.50 1305.39 L1905.50 1312.59 L1906.62 1312.59 L1906.62 1305.39 L1907.74 1305.39 L1907.74 1305.39 L1908.87 1305.39 L1908.87 1305.39 L1909.99 1305.39 L1909.99 1312.59 L1911.11 1312.59 L1911.11 1305.39 L1912.23 1305.39 L1912.23 1312.59 L1913.35 1312.59 L1913.35 1305.39 L1914.47 1305.39 L1914.47 1305.39 L1915.59 1305.39 L1915.59 1312.59 L1916.71 1312.59 L1916.71 1305.39 L1917.84 1305.39 L1917.84 1305.39 L1918.96 1305.39 L1918.96 1312.59 L1920.08 1312.59 L1920.08 1305.39 L1921.20 1305.39 L1921.20 1312.59 L1922.32 1312.59 L1922.32 1312.59 L1923.44 1312.59 L1923.44 1312.59 L1924.56 1312.59 L1924.56 1312.59 L1925.68 1312.59 L1925.68 1305.39 L1926.80 1305.39 L1926.80 1305.39 L1927.93 1305.39 L1927.93 1305.39 L1929.05 1305.39 L1929.05 1312.59 L1930.17 1312.59 L1930.17 1305.39 L1931.29 1305.39 L1931.29 1312.59 L1932.41 1312.59 L1932.41 1305.39 L1933.53 1305.39 L1933.53 1305.39 L1934.65 1305.39 L1934.65 1305.39 L1935.77 1305.39 L1935.77 1312.59 L1936.90 1312.59 L1936.90 1305.39 L1938.02 1305.39 L1938.02 1305.39 L1939.14 1305.39 L1939.14 1312.59 L1940.26 1312.59 L1940.26 1305.39 L1941.38 1305.39 L1941.38 1305.39 L1942.50 1305.39 L1942.50 1305.39 L1943.62 1305.39 L1943.62 1312.59 L1944.74 1312.59 L1944.74 1312.59 L1945.86 1312.59 L1945.86 1312.59 L1946.99 1312.59 L1946.99 1305.39 L1948.11 1305.39 L1948.11 1305.39 L1949.23 1305.39 L1949.23 1305.39 L1950.35 1305.39 L1950.35 1312.59 L1951.47 1312.59 L1951.47 1312.59 L1952.59 1312.59 L1952.59 1312.59 L1953.71 1312.59 L1953.71 1305.39 L1954.83 1305.39 L1954.83 1305.39 L1955.96 1305.39 L1955.96 1312.59 L1957.08 1312.59 L1957.08 1305.39 L1958.20 1305.39 L1958.20 1305.39 L1959.32 1305.39 L1959.32 1305.39 L1960.44 1305.39 L1960.44 1298.18 L1961.56 1298.18 L1961.56 1290.97 L1962.68 1290.97 L1962.68 1290.97 L1963.80 1290.97 L1963.80 1290.97 L1964.92 1290.97 L1964.92 1298.18 L1966.05 1298.18 L1966.05 1298.18 L1967.17 1298.18 L1967.17 1290.97 L1968.29 1290.97 L1968.29 1305.39 L1969.41 1305.39 L1969.41 1305.39 L1970.53 1305.39 L1970.53 1305.39 L1971.65 1305.39 L1971.65 1305.39 L1972.77 1305.39 L1972.77 1305.39 L1973.89 1305.39 L1973.89 1305.39 L1975.02 1305.39 L1975.02 1305.39 L1976.14 1305.39 L1976.14 1312.59 L1977.26 1312.59 L1977.26 1312.59 L1978.38 1312.59 L1978.38 1305.39 L1979.50 1305.39 L1979.50 1312.59 L1980.62 1312.59 L1980.62 1305.39 L1981.74 1305.39 L1981.74 1305.39 L1982.86 1305.39 L1982.86 1312.59 L1983.98 1312.59 L1983.98 1312.59 L1985.11 1312.59 L1985.11 1312.59 L1986.23 1312.59 L1986.23 1305.39 L1987.35 1305.39 L1987.35 1305.39 L1988.47 1305.39 L1988.47 1312.59 L1989.59 1312.59 L1989.59 1305.39 L1990.71 1305.39 L1990.71 1305.39 L1991.83 1305.39 L1991.83 1305.39 L1992.95 1305.39 L1992.95 1305.39 L1994.08 1305.39 L1994.08 1305.39 L1995.20 1305.39 L1995.20 1312.59 L1996.32 1312.59 L1996.32 1312.59 L1997.44 1312.59 L1997.44 1305.39 L1998.56 1305.39 L1998.56 1312.59 L1999.68 1312.59 L1999.68 1305.39 L2000.80 1305.39 L2000.80 1305.39 L2001.92 1305.39 L2001.92 1305.39 L2003.04 1305.39 L2003.04 1305.39 L2004.17 1305.39 L2004.17 1312.59 L2005.29 1312.59 L2005.29 1312.59 L2006.41 1312.59 L2006.41 1305.39 L2007.53 1305.39 L2007.53 1305.39 L2008.65 1305.39 L2008.65 1312.59 L2009.77 1312.59 L2009.77 1305.39 L2010.89 1305.39 L2010.89 1305.39 L2012.01 1305.39 L2012.01 1312.59 L2013.14 1312.59 L2013.14 1312.59 L2014.26 1312.59 L2014.26 1312.59 L2015.38 1312.59 L2015.38 1312.59 L2016.50 1312.59 L2016.50 1312.59 L2017.62 1312.59 L2017.62 1312.59 L2018.74 1312.59 L2018.74 1312.59 L2019.86 1312.59 L2019.86 1305.39 L2020.98 1305.39 L2020.98 1305.39 L2022.11 1305.39 L2022.11 1312.59 L2023.23 1312.59 L2023.23 1305.39 L2024.35 1305.39 L2024.35 1305.39 L2025.47 1305.39 L2025.47 1312.59 L2026.59 1312.59 L2026.59 1312.59 L2027.71 1312.59 L2027.71 1312.59 L2028.83 1312.59 L2028.83 1305.39 L2029.95 1305.39 L2029.95 1305.39 L2031.07 1305.39 L2031.07 1305.39 L2032.20 1305.39 L2032.20 1312.59 L2033.32 1312.59 L2033.32 1305.39 L2034.44 1305.39 L2034.44 1312.59 L2035.56 1312.59 L2035.56 1312.59 L2036.68 1312.59 L2036.68 1305.39 L2037.80 1305.39 L2037.80 1312.59 L2038.92 1312.59 L2038.92 1312.59 L2040.04 1312.59 L2040.04 1305.39 L2041.17 1305.39 L2041.17 1305.39 L2042.29 1305.39 L2042.29 1312.59 L2043.41 1312.59 L2043.41 1305.39 L2044.53 1305.39 L2044.53 1305.39 L2045.65 1305.39 L2045.65 1305.39 L2046.77 1305.39 L2046.77 1312.59 L2047.89 1312.59 L2047.89 1312.59 L2049.01 1312.59 L2049.01 1305.39 L2050.13 1305.39 L2050.13 1305.39 L2051.26 1305.39 L2051.26 1305.39 L2052.38 1305.39 L2052.38 1305.39 L2053.50 1305.39 L2053.50 1312.59 L2054.62 1312.59 L2054.62 1305.39 L2055.74 1305.39 L2055.74 1312.59 L2056.86 1312.59 L2056.86 1312.59 L2057.98 1312.59 L2057.98 1305.39 L2059.10 1305.39 L2059.10 1305.39 L2060.23 1305.39 L2060.23 1312.59 L2061.35 1312.59 L2061.35 1305.39 L2062.47 1305.39 L2062.47 1312.59 L2063.59 1312.59 L2063.59 1305.39 L2064.71 1305.39 L2064.71 1312.59 L2065.83 1312.59 L2065.83 1305.39 L2066.95 1305.39 L2066.95 1312.59 L2068.07 1312.59 L2068.07 1305.39 L2069.19 1305.39 L2069.19 1305.39 L2070.32 1305.39 L2070.32 1305.39 L2071.44 1305.39 L2071.44 1305.39 L2072.56 1305.39 L2072.56 1298.18 L2073.68 1298.18 L2073.68 1305.39 L2074.80 1305.39 L2074.80 1305.39 L2075.92 1305.39 L2075.92 1312.59 L2077.04 1312.59 L2077.04 1305.39 L2078.16 1305.39 L2078.16 1305.39 L2079.29 1305.39 L2079.29 1305.39 L2080.41 1305.39 L2080.41 1312.59 L2081.53 1312.59 L2081.53 1312.59 L2082.65 1312.59 L2082.65 1305.39 L2083.77 1305.39 L2083.77 1305.39 L2084.89 1305.39 L2084.89 1312.59 L2086.01 1312.59 L2086.01 1305.39 L2087.13 1305.39 L2087.13 1305.39 L2088.25 1305.39 L2088.25 1305.39 L2089.38 1305.39 L2089.38 1312.59 L2090.50 1312.59 L2090.50 1312.59 L2091.62 1312.59 L2091.62 1312.59 L2092.74 1312.59 L2092.74 1305.39 L2093.86 1305.39 L2093.86 1305.39 L2094.98 1305.39 L2094.98 1305.39 L2096.10 1305.39 L2096.10 1312.59 L2097.22 1312.59 L2097.22 1305.39 L2098.35 1305.39 L2098.35 1305.39 L2099.47 1305.39 L2099.47 1312.59 L2100.59 1312.59 L2100.59 1312.59 L2101.71 1312.59 L2101.71 1305.39 L2102.83 1305.39 L2102.83 1305.39 L2103.95 1305.39 L2103.95 1305.39 L2105.07 1305.39 L2105.07 1305.39 L2106.19 1305.39 L2106.19 1312.59 L2107.31 1312.59 L2107.31 1305.39 L2108.44 1305.39 L2108.44 1312.59 L2109.56 1312.59 L2109.56 1305.39 L2110.68 1305.39 L2110.68 1305.39 L2111.80 1305.39 L2111.80 1305.39 L2112.92 1305.39 L2112.92 1305.39 L2114.04 1305.39 L2114.04 1305.39 L2115.16 1305.39 L2115.16 1298.18 L2116.28 1298.18 L2116.28 1312.59 L2117.41 1312.59 L2117.41 1305.39 L2118.53 1305.39 L2118.53 1305.39 L2119.65 1305.39 L2119.65 1305.39 L2120.77 1305.39 L2120.77 1305.39 L2121.89 1305.39 L2121.89 1305.39 L2123.01 1305.39 L2123.01 1305.39 L2124.13 1305.39 L2124.13 1305.39 L2125.25 1305.39 L2125.25 1305.39 L2126.37 1305.39 L2126.37 1312.59 L2127.50 1312.59 L2127.50 1312.59 L2128.62 1312.59 L2128.62 1305.39 L2129.74 1305.39 L2129.74 1312.59 L2130.86 1312.59 L2130.86 1312.59 L2131.98 1312.59 L2131.98 1312.59 L2133.10 1312.59 L2133.10 1305.39 L2134.22 1305.39 L2134.22 1312.59 L2135.34 1312.59 L2135.34 1305.39 L2136.47 1305.39 L2136.47 1305.39 L2137.59 1305.39 L2137.59 1305.39 L2138.71 1305.39 L2138.71 1312.59 L2139.83 1312.59 L2139.83 1305.39 L2140.95 1305.39 L2140.95 1305.39 L2142.07 1305.39 L2142.07 1305.39 L2143.19 1305.39 L2143.19 1305.39 L2144.31 1305.39 L2144.31 1305.39 L2145.43 1305.39 L2145.43 1312.59 L2146.56 1312.59 L2146.56 1305.39 L2147.68 1305.39 L2147.68 1305.39 L2148.80 1305.39 L2148.80 1312.59 L2149.92 1312.59 L2149.92 1312.59 L2151.04 1312.59 L2151.04 1305.39 L2152.16 1305.39 L2152.16 1312.59 L2153.28 1312.59 L2153.28 1305.39 L2154.40 1305.39 L2154.40 1312.59 L2155.53 1312.59 L2155.53 1312.59 L2156.65 1312.59 L2156.65 1312.59 L2157.77 1312.59 L2157.77 1312.59 L2158.89 1312.59 L2158.89 1312.59 L2160.01 1312.59 L2160.01 1305.39 L2161.13 1305.39 L2161.13 1312.59 L2162.25 1312.59 L2162.25 1305.39 L2163.37 1305.39 L2163.37 1312.59 L2164.49 1312.59 L2164.49 1305.39 L2165.62 1305.39 L2165.62 1312.59 L2166.74 1312.59 L2166.74 1305.39 L2167.86 1305.39 L2167.86 1305.39 L2168.98 1305.39 L2168.98 1305.39 L2170.10 1305.39 L2170.10 1305.39 L2171.22 1305.39 L2171.22 1305.39 L2172.34 1305.39 L2172.34 1305.39 L2173.46 1305.39 L2173.46 1305.39 L2174.59 1305.39 L2174.59 1305.39 L2175.71 1305.39 L2175.71 1305.39 L2176.83 1305.39 L2176.83 1305.39 L2177.95 1305.39 L2177.95 1305.39 L2179.07 1305.39 L2179.07 1312.59 L2180.19 1312.59 L2180.19 1298.18 L2181.31 1298.18 L2181.31 1312.59 L2182.43 1312.59 L2182.43 1305.39 L2183.56 1305.39 L2183.56 1305.39 L2184.68 1305.39 L2184.68 1312.59 L2185.80 1312.59 L2185.80 1312.59 L2186.92 1312.59 L2186.92 1305.39 L2188.04 1305.39 L2188.04 1305.39 L2189.16 1305.39 L2189.16 1312.59 L2190.28 1312.59 L2190.28 1305.39 L2191.40 1305.39 L2191.40 1305.39 L2192.52 1305.39 L2192.52 1305.39 L2193.65 1305.39 L2193.65 1305.39 L2194.77 1305.39 L2194.77 1305.39 L2195.89 1305.39 L2195.89 1312.59 L2197.01 1312.59 L2197.01 1312.59 L2198.13 1312.59 L2198.13 1305.39 L2199.25 1305.39 L2199.25 1312.59 L2200.37 1312.59 L2200.37 1305.39 L2201.49 1305.39 L2201.49 1305.39 L2202.62 1305.39 L2202.62 1312.59 L2203.74 1312.59 L2203.74 1305.39 L2204.86 1305.39 L2204.86 1312.59 L2205.98 1312.59 L2205.98 1305.39 L2207.10 1305.39 L2207.10 1305.39 L2208.22 1305.39 L2208.22 1312.59 L2209.34 1312.59 L2209.34 1305.39 L2210.46 1305.39 L2210.46 1305.39 L2211.58 1305.39 L2211.58 1305.39 L2212.71 1305.39 L2212.71 1312.59 L2213.83 1312.59 L2213.83 1305.39 L2214.95 1305.39 L2214.95 1305.39 L2216.07 1305.39 L2216.07 1305.39 L2217.19 1305.39 L2217.19 1305.39 L2218.31 1305.39 L2218.31 1312.59 L2219.43 1312.59 L2219.43 1305.39 L2220.55 1305.39 L2220.55 1312.59 L2221.68 1312.59 L2221.68 1305.39 L2222.80 1305.39 L2222.80 1305.39 L2223.92 1305.39 L2223.92 1305.39 L2225.04 1305.39 L2225.04 1305.39 L2226.16 1305.39 L2226.16 1312.59 L2227.28 1312.59 L2227.28 1305.39 L2228.40 1305.39 L2228.40 1312.59 L2229.52 1312.59 L2229.52 1305.39 L2230.64 1305.39 L2230.64 1305.39 L2231.77 1305.39 L2231.77 1290.97 L2232.89 1290.97 L2232.89 1298.18 L2234.01 1298.18 L2234.01 1298.18 L2235.13 1298.18 L2235.13 1298.18 L2236.25 1298.18 L2236.25 1290.97 L2237.37 1290.97 L2237.37 1298.18 L2238.49 1298.18 L2238.49 1312.59 L2239.61 1312.59 L2239.61 1305.39 L2240.74 1305.39 L2240.74 1305.39 L2241.86 1305.39 L2241.86 1305.39 L2242.98 1305.39 L2242.98 1298.18 L2244.10 1298.18 L2244.10 1305.39 L2245.22 1305.39 L2245.22 1312.59 L2246.34 1312.59 L2246.34 1305.39 L2247.46 1305.39 L2247.46 1305.39 L2248.58 1305.39 L2248.58 1312.59 L2249.70 1312.59 L2249.70 1312.59 L2250.83 1312.59 L2250.83 1305.39 L2251.95 1305.39 L2251.95 1305.39 L2253.07 1305.39 L2253.07 1305.39 L2254.19 1305.39 L2254.19 1312.59 L2255.31 1312.59 L2255.31 1305.39 L2256.43 1305.39 L2256.43 1312.59 L2257.55 1312.59 L2257.55 1305.39 L2258.67 1305.39 L2258.67 1312.59 L2259.80 1312.59 L2259.80 1305.39 L2260.92 1305.39 L2260.92 1312.59 L2262.04 1312.59 L2262.04 1305.39 L2263.16 1305.39 L2263.16 1305.39 L2264.28 1305.39 L2264.28 1305.39 L2265.40 1305.39 L2265.40 1312.59 L2266.52 1312.59 L2266.52 1312.59 L2267.64 1312.59 L2267.64 1305.39 L2268.76 1305.39 L2268.76 1305.39 L2269.89 1305.39 L2269.89 1312.59 L2271.01 1312.59 L2271.01 1312.59 L2272.13 1312.59 L2272.13 1305.39 L2273.25 1305.39 L2273.25 1305.39 L2274.37 1305.39 L2274.37 1305.39 L2275.49 1305.39 L2275.49 1305.39 L2276.61 1305.39 L2276.61 1305.39 L2277.73 1305.39 L2277.73 1305.39 L2278.86 1305.39 L2278.86 1305.39 L2279.98 1305.39 L2279.98 1312.59 L2281.10 1312.59 L2281.10 1305.39 L2282.22 1305.39 L2282.22 1305.39 L2283.34 1305.39 L2283.34 1305.39 L2284.46 1305.39 L2284.46 1305.39 L2285.58 1305.39 L2285.58 1312.59 L2286.70 1312.59 L2286.70 1305.39 L2287.82 1305.39 L2287.82 1312.59 L2288.95 1312.59 L2288.95 1305.39 L2290.07 1305.39 L2290.07 1305.39 L2291.19 1305.39 L2291.19 1305.39 L2292.31 1305.39 L2292.31 1305.39 L2293.43 1305.39 L2293.43 1312.59 L2294.55 1312.59 L2294.55 1312.59 L2295.67 1312.59 L2295.67 1305.39 L2296.79 1305.39 L2296.79 1305.39 L2297.92 1305.39 L2297.92 1305.39 L2299.04 1305.39 L2299.04 1305.39 L2300.16 1305.39 L2300.16 1305.39 L2301.28 1305.39 L2301.28 1305.39 L2302.40 1305.39 L2302.40 1305.39 L2303.52 1305.39 L2303.52 1298.18 L2304.64 1298.18 L2304.64 1312.59 L2305.76 1312.59 L2305.76 1305.39 L2306.88 1305.39 L2306.88 1312.59 L2308.01 1312.59 L2308.01 1305.39 L2309.13 1305.39 L2309.13 1312.59 L2310.25 1312.59 L2310.25 1305.39 L2311.37 1305.39 L2311.37 1305.39 L2312.49 1305.39 L2312.49 1312.59 L2313.61 1312.59 L2313.61 1305.39 L2314.73 1305.39 L2314.73 1312.59 L2315.85 1312.59 L2315.85 1305.39 L2316.98 1305.39 L2316.98 1305.39 L2318.10 1305.39 L2318.10 1312.59 L2319.22 1312.59 L2319.22 1312.59 L2320.34 1312.59 L2320.34 1312.59 L2321.46 1312.59 L2321.46 1312.59 L2322.58 1312.59 L2322.58 1305.39 L2323.70 1305.39 L2323.70 1305.39 L2324.82 1305.39 L2324.82 1312.59 L2325.94 1312.59 L2325.94 1305.39 L2327.07 1305.39 L2327.07 1312.59 L2328.19 1312.59 L2328.19 1305.39 L2329.31 1305.39 L2329.31 1312.59 L2330.43 1312.59 L2330.43 1312.59 L2331.55 1312.59 L2331.55 1305.39 L2332.67 1305.39 L2332.67 1305.39 L2333.79 1305.39 L2333.79 1305.39 L2334.91 1305.39 L2334.91 1312.59 L2336.04 1312.59 L2336.04 1305.39 L2337.16 1305.39 L2337.16 1305.39 L2338.28 1305.39 L2338.28 1312.59 L2339.40 1312.59 L2339.40 1305.39 L2340.52 1305.39 L2340.52 1312.59 L2341.64 1312.59 L2341.64 1305.39 L2342.76 1305.39 L2342.76 1305.39 L2343.88 1305.39 L2343.88 1305.39 L2345.01 1305.39 L2345.01 1305.39 L2346.13 1305.39 L2346.13 1305.39 L2347.25 1305.39 L2347.25 1312.59 L2348.37 1312.59 L2348.37 1305.39 L2349.49 1305.39 L2349.49 1312.59 L2350.61 1312.59 L2350.61 1305.39 L2351.73 1305.39 L2351.73 1305.39 L2352.85 1305.39 L2352.85 1305.39 L2353.97 1305.39 L2353.97 1305.39 L2355.10 1305.39 L2355.10 1305.39 L2356.22 1305.39 L2356.22 1312.59 L2357.34 1312.59 L2357.34 1312.59 L2358.46 1312.59 L2358.46 1312.59 L2359.58 1312.59 L2359.58 1305.39 L2360.70 1305.39 L2360.70 1305.39 L2361.82 1305.39 L2361.82 1305.39 L2362.94 1305.39 L2362.94 1312.59 L2364.07 1312.59 L2364.07 1312.59 L2365.19 1312.59 L2365.19 1312.59 L2366.31 1312.59 L2366.31 1305.39 L2367.43 1305.39 L2367.43 1305.39 L2368.55 1305.39 L2368.55 1312.59 L2369.67 1312.59 L2369.67 1312.59 L2370.79 1312.59 L2370.79 1305.39 L2371.91 1305.39 L2371.91 1305.39 L2373.03 1305.39 L2373.03 1305.39 L2374.16 1305.39 L2374.16 1312.59 L2375.28 1312.59 L2375.28 1305.39 L2376.40 1305.39 L2376.40 1312.59 L2377.52 1312.59 L2377.52 1305.39 L2378.64 1305.39 L2378.64 1312.59 L2379.76 1312.59 L2379.76 1312.59 L2380.88 1312.59 L2380.88 1305.39 L2382.00 1305.39 L2382.00 1298.18 L2383.13 1298.18 L2383.13 1305.39 L2384.25 1305.39 L2384.25 1305.39 L2385.37 1305.39 L2385.37 1305.39 L2386.49 1305.39 L2386.49 1312.59 L2387.61 1312.59 L2387.61 1312.59 L2388.73 1312.59 L2388.73 1305.39 L2389.85 1305.39 L2389.85 1312.59 L2390.97 1312.59 L2390.97 1312.59 L2392.09 1312.59 L2392.09 1312.59 L2393.22 1312.59 L2393.22 1305.39 L2394.34 1305.39 L2394.34 1305.39 L2395.46 1305.39 L2395.46 1312.59 L2396.58 1312.59 L2396.58 1312.59 L2397.70 1312.59 L2397.70 1312.59 L2398.82 1312.59 L2398.82 1312.59 L2399.94 1312.59 L2399.94 1305.39 L2401.06 1305.39 L2401.06 1305.39 L2402.19 1305.39 L2402.19 1305.39 L2403.31 1305.39 L2403.31 1312.59 L2404.43 1312.59 L2404.43 1305.39 L2405.55 1305.39 L2405.55 1312.59 L2406.67 1312.59 L2406.67 1312.59 L2407.79 1312.59 L2407.79 1305.39 L2408.91 1305.39 L2408.91 1305.39 L2410.03 1305.39 L2410.03 1312.59 L2411.15 1312.59 L2411.15 1305.39 L2412.28 1305.39 L2412.28 1305.39 L2413.40 1305.39 L2413.40 1305.39 L2414.52 1305.39 L2414.52 1312.59 L2415.64 1312.59 L2415.64 1319.80Z" fill="#a0eec4"/>
<path d="M236.06 1319.80 L236.06 1290.97 L237.19 1290.97 L237.19 1290.97 L238.31 1290.97 L238.31 1290.97 L239.43 1290.97 L239.43 1290.97 L240.55 1290.97 L240.55 1290.97 L241.67 1290.97 L241.67 1290.97 L242.79 1290.97 L242.79 1298.18 L243.91 1298.18 L243.91 1290.97 L245.03 1290.97 L245.03 1290.97 L246.16 1290.97 L246.16 1290.97 L247.28 1290.97 L247.28 1290.97 L248.40 1290.97 L248.40 1298.18 L249.52 1298.18 L249.52 1290.97 L250.64 1290.97 L250.64 1290.97 L251.76 1290.97 L251.76 1298.18 L252.88 1298.18 L252.88 1298.18 L254.00 1298.18 L254.00 1290.97 L255.12 1290.97 L255.12 1290.97 L256.25 1290.97 L256.25 1290.97 L257.37 1290.97 L257.37 1298.18 L258.49 1298.18 L258.49 1298.18 L259.61 1298.18 L259.61 1298.18 L260.73 1298.18 L260.73 1290.97 L261.85 1290.97 L261.85 1290.97 L262.97 1290.97 L262.97 1290.97 L264.09 1290.97 L264.09 1298.18 L265.22 1298.18 L265.22 1298.18 L266.34 1298.18 L266.34 1298.18 L267.46 1298.18 L267.46 1298.18 L268.58 1298.18 L268.58 1298.18 L269.70 1298.18 L269.70 1298.18 L270.82 1298.18 L270.82 1298.18 L271.94 1298.18 L271.94 1298.18 L273.06 1298.18 L273.06 1298.18 L274.18 1298.18 L274.18 1290.97 L275.31 1290.97 L275.31 1298.18 L276.43 1298.18 L276.43 1298.18 L277.55 1298.18 L277.55 1298.18 L278.67 1298.18 L278.67 1298.18 L279.79 1298.18 L279.79 1298.18 L280.91 1298.18 L280.91 1298.18 L282.03 1298.18 L282.03 1298.18 L283.15 1298.18 L283.15 1298.18 L284.28 1298.18 L284.28 1290.97 L285.40 1290.97 L285.40 1298.18 L286.52 1298.18 L286.52 1298.18 L287.64 1298.18 L287.64 1298.18 L288.76 1298.18 L288.76 1298.18 L289.88 1298.18 L289.88 1298.18 L291.00 1298.18 L291.00 1298.18 L292.12 1298.18 L292.12 1298.18 L293.24 1298.18 L293.24 1298.18 L294.37 1298.18 L294.37 1290.97 L295.49 1290.97 L295.49 1290.97 L296.61 1290.97 L296.61 1298.18 L297.73 1298.18 L297.73 1298.18 L298.85 1298.18 L298.85 1298.18 L299.97 1298.18 L299.97 1290.97 L301.09 1290.97 L301.09 1298.18 L302.21 1298.18 L302.21 1298.18 L303.34 1298.18 L303.34 1298.18 L304.46 1298.18 L304.46 1298.18 L305.58 1298.18 L305.58 1298.18 L306.70 1298.18 L306.70 1305.39 L307.82 1305.39 L307.82 1305.39 L308.94 1305.39 L308.94 1298.18 L310.06 1298.18 L310.06 1298.18 L311.18 1298.18 L311.18 1298.18 L312.30 1298.18 L312.30 1298.18 L313.43 1298.18 L313.43 1298.18 L314.55 1298.18 L314.55 1305.39 L315.67 1305.39 L315.67 1305.39 L316.79 1305.39 L316.79 1298.18 L317.91 1298.18 L317.91 1298.18 L319.03 1298.18 L319.03 1298.18 L320.15 1298.18 L320.15 1298.18 L321.27 1298.18 L321.27 1298.18 L322.40 1298.18 L322.40 1298.18 L323.52 1298.18 L323.52 1305.39 L324.64 1305.39 L324.64 1298.18 L325.76 1298.18 L325.76 1298.18 L326.88 1298.18 L326.88 1305.39 L328.00 1305.39 L328.00 1305.39 L329.12 1305.39 L329.12 1298.18 L330.24 1298.18 L330.24 1305.39 L331.36 1305.39 L331.36 1298.18 L332.49 1298.18 L332.49 1305.39 L333.61 1305.39 L333.61 1305.39 L334.73 1305.39 L334.73 1305.39 L335.85 1305.39 L335.85 1305.39 L336.97 1305.39 L336.97 1298.18 L338.09 1298.18 L338.09 1298.18 L339.21 1298.18 L339.21 1298.18 L340.33 1298.18 L340.33 1305.39 L341.46 1305.39 L341.46 1305.39 L342.58 1305.39 L342.58 1305.39 L343.70 1305.39 L343.70 1298.18 L344.82 1298.18 L344.82 1298.18 L345.94 1298.18 L345.94 1305.39 L347.06 1305.39 L347.06 1305.39 L348.18 1305.39 L348.18 1305.39 L349.30 1305.39 L349.30 1305.39 L350.42 1305.39 L350.42 1305.39 L351.55 1305.39 L351.55 1305.39 L352.67 1305.39 L352.67 1298.18 L353.79 1298.18 L353.79 1305.39 L354.91 1305.39 L354.91 1298.18 L356.03 1298.18 L356.03 1298.18 L357.15 1298.18 L357.15 1298.18 L358.27 1298.18 L358.27 1298.18 L359.39 1298.18 L359.39 1298.18 L360.52 1298.18 L360.52 1305.39 L361.64 1305.39 L361.64 1305.39 L362.76 1305.39 L362.76 1298.18 L363.88 1298.18 L363.88 1305.39 L365.00 1305.39 L365.00 1305.39 L366.12 1305.39 L366.12 1305.39 L367.24 1305.39 L367.24 1298.18 L368.36 1298.18 L368.36 1298.18 L369.48 1298.18 L369.48 1298.18 L370.61 1298.18 L370.61 1298.18 L371.73 1298.18 L371.73 1298.18 L372.85 1298.18 L372.85 1305.39 L373.97 1305.39 L373.97 1305.39 L375.09 1305.39 L375.09 1305.39 L376.21 1305.39 L376.21 1305.39 L377.33 1305.39 L377.33 1305.39 L378.45 1305.39 L378.45 1305.39 L379.58 1305.39 L379.58 1298.18 L380.70 1298.18 L380.70 1305.39 L381.82 1305.39 L381.82 1305.39 L382.94 1305.39 L382.94 1305.39 L384.06 1305.39 L384.06 1319.80Z M558.96 1319.80 L558.96 1290.97 L560.09 1290.97 L560.09 1290.97 L561.21 1290.97 L561.21 1290.97 L562.33 1290.97 L562.33 1290.97 L563.45 1290.97 L563.45 1290.97 L564.57 1290.97 L564.57 1283.76 L565.69 1283.76 L565.69 1283.76 L566.81 1283.76 L566.81 1276.56 L567.93 1276.56 L567.93 1276.56 L569.06 1276.56 L569.06 1283.76 L570.18 1283.76 L570.18 1283.76 L571.30 1283.76 L571.30 1283.76 L572.42 1283.76 L572.42 1276.56 L573.54 1276.56 L573.54 1276.56 L574.66 1276.56 L574.66 1262.14 L575.78 1262.14 L575.78 1240.52 L576.90 1240.52 L576.90 1218.90 L578.02 1218.90 L578.02 1218.90 L579.15 1218.90 L579.15 1211.69 L580.27 1211.69 L580.27 1204.49 L581.39 1204.49 L581.39 1175.66 L582.51 1175.66 L582.51 1031.52 L583.63 1031.52 L583.63 1031.52 L584.75 1031.52 L584.75 1146.83 L585.87 1146.83 L585.87 1211.69 L586.99 1211.69 L586.99 1240.52 L588.12 1240.52 L588.12 1262.14 L589.24 1262.14 L589.24 1269.35 L590.36 1269.35 L590.36 1269.35 L591.48 1269.35 L591.48 1269.35 L592.60 1269.35 L592.60 1283.76 L593.72 1283.76 L593.72 1290.97 L594.84 1290.97 L594.84 1298.18 L595.96 1298.18 L595.96 1298.18 L597.08 1298.18 L597.08 1262.14 L598.21 1262.14 L598.21 1254.94 L599.33 1254.94 L599.33 1211.69 L600.45 1211.69 L600.45 1233.32 L601.57 1233.32 L601.57 1211.69 L602.69 1211.69 L602.69 1233.32 L603.81 1233.32 L603.81 1218.90 L604.93 1218.90 L604.93 1226.11 L606.05 1226.11 L606.05 1233.32 L607.18 1233.32 L607.18 1233.32 L608.30 1233.32 L608.30 1240.52 L609.42 1240.52 L609.42 1254.94 L610.54 1254.94 L610.54 1276.56 L611.66 1276.56 L611.66 1290.97 L612.78 1290.97 L612.78 1290.97 L613.90 1290.97 L613.90 1298.18 L615.02 1298.18 L615.02 1298.18 L616.14 1298.18 L616.14 1290.97 L617.27 1290.97 L617.27 1290.97 L618.39 1290.97 L618.39 1290.97 L619.51 1290.97 L619.51 1283.76 L620.63 1283.76 L620.63 1233.32 L621.75 1233.32 L621.75 1168.45 L622.87 1168.45 L622.87 1081.97 L623.99 1081.97 L623.99 1139.62 L625.11 1139.62 L625.11 1211.69 L626.24 1211.69 L626.24 1218.90 L627.36 1218.90 L627.36 1125.21 L628.48 1125.21 L628.48 1154.04 L629.60 1154.04 L629.60 1211.69 L630.72 1211.69 L630.72 1197.28 L631.84 1197.28 L631.84 1218.90 L632.96 1218.90 L632.96 1204.49 L634.08 1204.49 L634.08 1211.69 L635.20 1211.69 L635.20 1218.90 L636.33 1218.90 L636.33 1233.32 L637.45 1233.32 L637.45 1226.11 L638.57 1226.11 L638.57 1226.11 L639.69 1226.11 L639.69 1218.90 L640.81 1218.90 L640.81 1233.32 L641.93 1233.32 L641.93 1233.32 L643.05 1233.32 L643.05 1240.52 L644.17 1240.52 L644.17 1247.73 L645.30 1247.73 L645.30 1254.94 L646.42 1254.94 L646.42 1254.94 L647.54 1254.94 L647.54 1254.94 L648.66 1254.94 L648.66 1254.94 L649.78 1254.94 L649.78 1254.94 L650.90 1254.94 L650.90 1254.94 L652.02 1254.94 L652.02 1254.94 L653.14 1254.94 L653.14 1262.14 L654.26 1262.14 L654.26 1262.14 L655.39 1262.14 L655.39 1283.76 L656.51 1283.76 L656.51 1298.18 L657.63 1298.18 L657.63 1290.97 L658.75 1290.97 L658.75 1283.76 L659.87 1283.76 L659.87 1269.35 L660.99 1269.35 L660.99 1233.32 L662.11 1233.32 L662.11 1197.28 L663.23 1197.28 L663.23 1240.52 L664.36 1240.52 L664.36 1269.35 L665.48 1269.35 L665.48 1269.35 L666.60 1269.35 L666.60 1269.35 L667.72 1269.35 L667.72 1269.35 L668.84 1269.35 L668.84 1283.76 L669.96 1283.76 L669.96 1290.97 L671.08 1290.97 L671.08 1298.18 L672.20 1298.18 L672.20 1298.18 L673.32 1298.18 L673.32 1262.14 L674.45 1262.14 L674.45 1168.45 L675.57 1168.45 L675.57 1118.00 L676.69 1118.00 L676.69 1053.14 L677.81 1053.14 L677.81 1096.38 L678.93 1096.38 L678.93 1132.42 L680.05 1132.42 L680.05 1197.28 L681.17 1197.28 L681.17 1182.87 L682.29 1182.87 L682.29 1204.49 L683.42 1204.49 L683.42 1226.11 L684.54 1226.11 L684.54 1218.90 L685.66 1218.90 L685.66 1226.11 L686.78 1226.11 L686.78 1240.52 L687.90 1240.52 L687.90 1254.94 L689.02 1254.94 L689.02 1269.35 L690.14 1269.35 L690.14 1262.14 L691.26 1262.14 L691.26 1283.76 L692.38 1283.76 L692.38 1298.18 L693.51 1298.18 L693.51 1298.18 L694.63 1298.18 L694.63 1290.97 L695.75 1290.97 L695.75 1290.97 L696.87 1290.97 L696.87 1298.18 L697.99 1298.18 L697.99 1298.18 L699.11 1298.18 L699.11 1298.18 L700.23 1298.18 L700.23 1290.97 L701.35 1290.97 L701.35 1290.97 L702.48 1290.97 L702.48 1290.97 L703.60 1290.97 L703.60 1290.97 L704.72 1290.97 L704.72 1283.76 L705.84 1283.76 L705.84 1283.76 L706.96 1283.76 L706.96 1319.80Z M881.86 1319.80 L881.86 1254.94 L882.99 1254.94 L882.99 1254.94 L884.11 1254.94 L884.11 1290.97 L885.23 1290.97 L885.23 1290.97 L886.35 1290.97 L886.35 1283.76 L887.47 1283.76 L887.47 1283.76 L888.59 1283.76 L888.59 1290.97 L889.71 1290.97 L889.71 1290.97 L890.83 1290.97 L890.83 1290.97 L891.96 1290.97 L891.96 1290.97 L893.08 1290.97 L893.08 1290.97 L894.20 1290.97 L894.20 1290.97 L895.32 1290.97 L895.32 1290.97 L896.44 1290.97 L896.44 1269.35 L897.56 1269.35 L897.56 1218.90 L898.68 1218.90 L898.68 1146.83 L899.80 1146.83 L899.80 1067.55 L900.92 1067.55 L900.92 1045.93 L902.05 1045.93 L902.05 1175.66 L903.17 1175.66 L903.17 1204.49 L904.29 1204.49 L904.29 1168.45 L905.41 1168.45 L905.41 1154.04 L906.53 1154.04 L906.53 1139.62 L907.65 1139.62 L907.65 1204.49 L908.77 1204.49 L908.77 1190.07 L909.89 1190.07 L909.89 1161.25 L911.02 1161.25 L911.02 1190.07 L912.14 1190.07 L912.14 1211.69 L913.26 1211.69 L913.26 1218.90 L914.38 1218.90 L914.38 1211.69 L915.50 1211.69 L915.50 1218.90 L916.62 1218.90 L916.62 1218.90 L917.74 1218.90 L917.74 1168.45 L918.86 1168.45 L918.86 1103.59 L919.98 1103.59 L919.98 1074.76 L921.11 1074.76 L921.11 1197.28 L922.23 1197.28 L922.23 1182.87 L923.35 1182.87 L923.35 1197.28 L924.47 1197.28 L924.47 1211.69 L925.59 1211.69 L925.59 1218.90 L926.71 1218.90 L926.71 1211.69 L927.83 1211.69 L927.83 1154.04 L928.95 1154.04 L928.95 1190.07 L930.08 1190.07 L930.08 1233.32 L931.20 1233.32 L931.20 1211.69 L932.32 1211.69 L932.32 1211.69 L933.44 1211.69 L933.44 1211.69 L934.56 1211.69 L934.56 1218.90 L935.68 1218.90 L935.68 1218.90 L936.80 1218.90 L936.80 1240.52 L937.92 1240.52 L937.92 1218.90 L939.04 1218.90 L939.04 1218.90 L940.17 1218.90 L940.17 1233.32 L941.29 1233.32 L941.29 1218.90 L942.41 1218.90 L942.41 1218.90 L943.53 1218.90 L943.53 1218.90 L944.65 1218.90 L944.65 1211.69 L945.77 1211.69 L945.77 1211.69 L946.89 1211.69 L946.89 1218.90 L948.01 1218.90 L948.01 1226.11 L949.14 1226.11 L949.14 1204.49 L950.26 1204.49 L950.26 1161.25 L951.38 1161.25 L951.38 1132.42 L952.50 1132.42 L952.50 1168.45 L953.62 1168.45 L953.62 1211.69 L954.74 1211.69 L954.74 1218.90 L955.86 1218.90 L955.86 1218.90 L956.98 1218.90 L956.98 1218.90 L958.10 1218.90 L958.10 1218.90 L959.23 1218.90 L959.23 1204.49 L960.35 1204.49 L960.35 1218.90 L961.47 1218.90 L961.47 1226.11 L962.59 1226.11 L962.59 1218.90 L963.71 1218.90 L963.71 1211.69 L964.83 1211.69 L964.83 1226.11 L965.95 1226.11 L965.95 1247.73 L967.07 1247.73 L967.07 1254.94 L968.20 1254.94 L968.20 1262.14 L969.32 1262.14 L969.32 1262.14 L970.44 1262.14 L970.44 1254.94 L971.56 1254.94 L971.56 1262.14 L972.68 1262.14 L972.68 1247.73 L973.80 1247.73 L973.80 1240.52 L974.92 1240.52 L974.92 1247.73 L976.04 1247.73 L976.04 1247.73 L977.16 1247.73 L977.16 1254.94 L978.29 1254.94 L978.29 1175.66 L979.41 1175.66 L979.41 1096.38 L980.53 1096.38 L980.53 1045.93 L981.65 1045.93 L981.65 1053.14 L982.77 1053.14 L982.77 1053.14 L983.89 1053.14 L983.89 1182.87 L985.01 1182.87 L985.01 1175.66 L986.13 1175.66 L986.13 1175.66 L987.26 1175.66 L987.26 1190.07 L988.38 1190.07 L988.38 1197.28 L989.50 1197.28 L989.50 1204.49 L990.62 1204.49 L990.62 1204.49 L991.74 1204.49 L991.74 1226.11 L992.86 1226.11 L992.86 1262.14 L993.98 1262.14 L993.98 1269.35 L995.10 1269.35 L995.10 1233.32 L996.22 1233.32 L996.22 1240.52 L997.35 1240.52 L997.35 1240.52 L998.47 1240.52 L998.47 1233.32 L999.59 1233.32 L999.59 1218.90 L1000.71 1218.90 L1000.71 1233.32 L1001.83 1233.32 L1001.83 1226.11 L1002.95 1226.11 L1002.95 1218.90 L1004.07 1218.90 L1004.07 1211.69 L1005.19 1211.69 L1005.19 1175.66 L1006.32 1175.66 L1006.32 1190.07 L1007.44 1190.07 L1007.44 1211.69 L1008.56 1211.69 L1008.56 1240.52 L1009.68 1240.52 L1009.68 1233.32 L1010.80 1233.32 L1010.80 1211.69 L1011.92 1211.69 L1011.92 1240.52 L1013.04 1240.52 L1013.04 1240.52 L1014.16 1240.52 L1014.16 1240.52 L1015.28 1240.52 L1015.28 1233.32 L1016.41 1233.32 L1016.41 1226.11 L1017.53 1226.11 L1017.53 1240.52 L1018.65 1240.52 L1018.65 1254.94 L1019.77 1254.94 L1019.77 1254.94 L1020.89 1254.94 L1020.89 1254.94 L1022.01 1254.94 L1022.01 1254.94 L1023.13 1254.94 L1023.13 1254.94 L1024.25 1254.94 L1024.25 1254.94 L1025.38 1254.94 L1025.38 1312.59 L1026.50 1312.59 L1026.50 1312.59 L1027.62 1312.59 L1027.62 1312.59 L1028.74 1312.59 L1028.74 1312.59 L1029.86 1312.59 L1029.86 1319.80Z M1204.76 1319.80 L1204.76 1298.18 L1205.89 1298.18 L1205.89 1290.97 L1207.01 1290.97 L1207.01 1283.76 L1208.13 1283.76 L1208.13 1283.76 L1209.25 1283.76 L1209.25 1269.35 L1210.37 1269.35 L1210.37 1276.56 L1211.49 1276.56 L1211.49 1283.76 L1212.61 1283.76 L1212.61 1290.97 L1213.73 1290.97 L1213.73 1283.76 L1214.86 1283.76 L1214.86 1276.56 L1215.98 1276.56 L1215.98 1269.35 L1217.10 1269.35 L1217.10 1283.76 L1218.22 1283.76 L1218.22 1262.14 L1219.34 1262.14 L1219.34 1233.32 L1220.46 1233.32 L1220.46 1211.69 L1221.58 1211.69 L1221.58 1190.07 L1222.70 1190.07 L1222.70 1132.42 L1223.82 1132.42 L1223.82 909.00 L1224.95 909.00 L1224.95 952.24 L1226.07 952.24 L1226.07 988.28 L1227.19 988.28 L1227.19 1060.35 L1228.31 1060.35 L1228.31 988.28 L1229.43 988.28 L1229.43 1017.11 L1230.55 1017.11 L1230.55 1009.90 L1231.67 1009.90 L1231.67 1089.18 L1232.79 1089.18 L1232.79 1168.45 L1233.92 1168.45 L1233.92 1182.87 L1235.04 1182.87 L1235.04 1074.76 L1236.16 1074.76 L1236.16 1125.21 L1237.28 1125.21 L1237.28 1175.66 L1238.40 1175.66 L1238.40 1204.49 L1239.52 1204.49 L1239.52 1262.14 L1240.64 1262.14 L1240.64 1269.35 L1241.76 1269.35 L1241.76 1276.56 L1242.88 1276.56 L1242.88 1283.76 L1244.01 1283.76 L1244.01 1290.97 L1245.13 1290.97 L1245.13 1298.18 L1246.25 1298.18 L1246.25 1298.18 L1247.37 1298.18 L1247.37 1305.39 L1248.49 1305.39 L1248.49 1269.35 L1249.61 1269.35 L1249.61 1197.28 L1250.73 1197.28 L1250.73 1125.21 L1251.85 1125.21 L1251.85 1045.93 L1252.98 1045.93 L1252.98 1125.21 L1254.10 1125.21 L1254.10 1125.21 L1255.22 1125.21 L1255.22 1211.69 L1256.34 1211.69 L1256.34 1204.49 L1257.46 1204.49 L1257.46 1211.69 L1258.58 1211.69 L1258.58 1218.90 L1259.70 1218.90 L1259.70 1233.32 L1260.82 1233.32 L1260.82 1247.73 L1261.94 1247.73 L1261.94 1254.94 L1263.07 1254.94 L1263.07 1211.69 L1264.19 1211.69 L1264.19 1103.59 L1265.31 1103.59 L1265.31 1067.55 L1266.43 1067.55 L1266.43 1024.31 L1267.55 1024.31 L1267.55 1002.69 L1268.67 1002.69 L1268.67 1089.18 L1269.79 1089.18 L1269.79 1182.87 L1270.91 1182.87 L1270.91 1204.49 L1272.04 1204.49 L1272.04 1182.87 L1273.16 1182.87 L1273.16 1139.62 L1274.28 1139.62 L1274.28 1118.00 L1275.40 1118.00 L1275.40 1161.25 L1276.52 1161.25 L1276.52 1161.25 L1277.64 1161.25 L1277.64 1190.07 L1278.76 1190.07 L1278.76 1154.04 L1279.88 1154.04 L1279.88 1175.66 L1281.00 1175.66 L1281.00 1182.87 L1282.13 1182.87 L1282.13 1175.66 L1283.25 1175.66 L1283.25 1175.66 L1284.37 1175.66 L1284.37 1175.66 L1285.49 1175.66 L1285.49 1175.66 L1286.61 1175.66 L1286.61 1175.66 L1287.73 1175.66 L1287.73 1218.90 L1288.85 1218.90 L1288.85 1218.90 L1289.97 1218.90 L1289.97 1218.90 L1291.10 1218.90 L1291.10 1218.90 L1292.22 1218.90 L1292.22 1218.90 L1293.34 1218.90 L1293.34 1211.69 L1294.46 1211.69 L1294.46 1211.69 L1295.58 1211.69 L1295.58 1211.69 L1296.70 1211.69 L1296.70 1218.90 L1297.82 1218.90 L1297.82 1218.90 L1298.94 1218.90 L1298.94 1218.90 L1300.06 1218.90 L1300.06 1247.73 L1301.19 1247.73 L1301.19 1290.97 L1302.31 1290.97 L1302.31 1233.32 L1303.43 1233.32 L1303.43 1045.93 L1304.55 1045.93 L1304.55 1060.35 L1305.67 1060.35 L1305.67 1081.97 L1306.79 1081.97 L1306.79 1096.38 L1307.91 1096.38 L1307.91 1146.83 L1309.03 1146.83 L1309.03 1182.87 L1310.16 1182.87 L1310.16 1118.00 L1311.28 1118.00 L1311.28 1002.69 L1312.40 1002.69 L1312.40 952.24 L1313.52 952.24 L1313.52 1146.83 L1314.64 1146.83 L1314.64 1197.28 L1315.76 1197.28 L1315.76 1197.28 L1316.88 1197.28 L1316.88 1204.49 L1318.00 1204.49 L1318.00 1211.69 L1319.12 1211.69 L1319.12 1218.90 L1320.25 1218.90 L1320.25 1211.69 L1321.37 1211.69 L1321.37 1197.28 L1322.49 1197.28 L1322.49 1204.49 L1323.61 1204.49 L1323.61 1211.69 L1324.73 1211.69 L1324.73 1218.90 L1325.85 1218.90 L1325.85 1226.11 L1326.97 1226.11 L1326.97 1226.11 L1328.09 1226.11 L1328.09 1233.32 L1329.22 1233.32 L1329.22 1204.49 L1330.34 1204.49 L1330.34 1182.87 L1331.46 1182.87 L1331.46 1146.83 L1332.58 1146.83 L1332.58 1168.45 L1333.70 1168.45 L1333.70 1182.87 L1334.82 1182.87 L1334.82 1204.49 L1335.94 1204.49 L1335.94 1226.11 L1337.06 1226.11 L1337.06 1226.11 L1338.18 1226.11 L1338.18 1226.11 L1339.31 1226.11 L1339.31 1226.11 L1340.43 1226.11 L1340.43 1254.94 L1341.55 1254.94 L1341.55 1254.94 L1342.67 1254.94 L1342.67 1247.73 L1343.79 1247.73 L1343.79 1247.73 L1344.91 1247.73 L1344.91 1247.73 L1346.03 1247.73 L1346.03 1247.73 L1347.15 1247.73 L1347.15 1262.14 L1348.28 1262.14 L1348.28 1254.94 L1349.40 1254.94 L1349.40 1254.94 L1350.52 1254.94 L1350.52 1269.35 L1351.64 1269.35 L1351.64 1262.14 L1352.76 1262.14 L1352.76 1319.80Z M1527.66 1319.80 L1527.66 1290.97 L1528.79 1290.97 L1528.79 1298.18 L1529.91 1298.18 L1529.91 1298.18 L1531.03 1298.18 L1531.03 1298.18 L1532.15 1298.18 L1532.15 1283.76 L1533.27 1283.76 L1533.27 1276.56 L1534.39 1276.56 L1534.39 1276.56 L1535.51 1276.56 L1535.51 1276.56 L1536.63 1276.56 L1536.63 1276.56 L1537.76 1276.56 L1537.76 1276.56 L1538.88 1276.56 L1538.88 1283.76 L1540.00 1283.76 L1540.00 1283.76 L1541.12 1283.76 L1541.12 1283.76 L1542.24 1283.76 L1542.24 1283.76 L1543.36 1283.76 L1543.36 1283.76 L1544.48 1283.76 L1544.48 1211.69 L1545.60 1211.69 L1545.60 1110.80 L1546.72 1110.80 L1546.72 1197.28 L1547.85 1197.28 L1547.85 1240.52 L1548.97 1240.52 L1548.97 1233.32 L1550.09 1233.32 L1550.09 1139.62 L1551.21 1139.62 L1551.21 1038.73 L1552.33 1038.73 L1552.33 880.17 L1553.45 880.17 L1553.45 966.66 L1554.57 966.66 L1554.57 966.66 L1555.69 966.66 L1555.69 1154.04 L1556.82 1154.04 L1556.82 1168.45 L1557.94 1168.45 L1557.94 1168.45 L1559.06 1168.45 L1559.06 1182.87 L1560.18 1182.87 L1560.18 1211.69 L1561.30 1211.69 L1561.30 1211.69 L1562.42 1211.69 L1562.42 1283.76 L1563.54 1283.76 L1563.54 1290.97 L1564.66 1290.97 L1564.66 1298.18 L1565.78 1298.18 L1565.78 1305.39 L1566.91 1305.39 L1566.91 1305.39 L1568.03 1305.39 L1568.03 1312.59 L1569.15 1312.59 L1569.15 1305.39 L1570.27 1305.39 L1570.27 1305.39 L1571.39 1305.39 L1571.39 1298.18 L1572.51 1298.18 L1572.51 1276.56 L1573.63 1276.56 L1573.63 1254.94 L1574.75 1254.94 L1574.75 1233.32 L1575.88 1233.32 L1575.88 1197.28 L1577.00 1197.28 L1577.00 1218.90 L1578.12 1218.90 L1578.12 1211.69 L1579.24 1211.69 L1579.24 1197.28 L1580.36 1197.28 L1580.36 1045.93 L1581.48 1045.93 L1581.48 1031.52 L1582.60 1031.52 L1582.60 1024.31 L1583.72 1024.31 L1583.72 1168.45 L1584.84 1168.45 L1584.84 1247.73 L1585.97 1247.73 L1585.97 1262.14 L1587.09 1262.14 L1587.09 1269.35 L1588.21 1269.35 L1588.21 1269.35 L1589.33 1269.35 L1589.33 1269.35 L1590.45 1269.35 L1590.45 1254.94 L1591.57 1254.94 L1591.57 1233.32 L1592.69 1233.32 L1592.69 1190.07 L1593.81 1190.07 L1593.81 1154.04 L1594.94 1154.04 L1594.94 1125.21 L1596.06 1125.21 L1596.06 1103.59 L1597.18 1103.59 L1597.18 1197.28 L1598.30 1197.28 L1598.30 1233.32 L1599.42 1233.32 L1599.42 1226.11 L1600.54 1226.11 L1600.54 1226.11 L1601.66 1226.11 L1601.66 1233.32 L1602.78 1233.32 L1602.78 1240.52 L1603.90 1240.52 L1603.90 1240.52 L1605.03 1240.52 L1605.03 1269.35 L1606.15 1269.35 L1606.15 1276.56 L1607.27 1276.56 L1607.27 1290.97 L1608.39 1290.97 L1608.39 1290.97 L1609.51 1290.97 L1609.51 1269.35 L1610.63 1269.35 L1610.63 1247.73 L1611.75 1247.73 L1611.75 1254.94 L1612.87 1254.94 L1612.87 1262.14 L1614.00 1262.14 L1614.00 1262.14 L1615.12 1262.14 L1615.12 1262.14 L1616.24 1262.14 L1616.24 1262.14 L1617.36 1262.14 L1617.36 1262.14 L1618.48 1262.14 L1618.48 1269.35 L1619.60 1269.35 L1619.60 1262.14 L1620.72 1262.14 L1620.72 1262.14 L1621.84 1262.14 L1621.84 1283.76 L1622.96 1283.76 L1622.96 1298.18 L1624.09 1298.18 L1624.09 1283.76 L1625.21 1283.76 L1625.21 1254.94 L1626.33 1254.94 L1626.33 1233.32 L1627.45 1233.32 L1627.45 1262.14 L1628.57 1262.14 L1628.57 1269.35 L1629.69 1269.35 L1629.69 1269.35 L1630.81 1269.35 L1630.81 1269.35 L1631.93 1269.35 L1631.93 1276.56 L1633.06 1276.56 L1633.06 1269.35 L1634.18 1269.35 L1634.18 1204.49 L1635.30 1204.49 L1635.30 1103.59 L1636.42 1103.59 L1636.42 1038.73 L1637.54 1038.73 L1637.54 1103.59 L1638.66 1103.59 L1638.66 1060.35 L1639.78 1060.35 L1639.78 1132.42 L1640.90 1132.42 L1640.90 1161.25 L1642.02 1161.25 L1642.02 1146.83 L1643.15 1146.83 L1643.15 1168.45 L1644.27 1168.45 L1644.27 1197.28 L1645.39 1197.28 L1645.39 1233.32 L1646.51 1233.32 L1646.51 1226.11 L1647.63 1226.11 L1647.63 1240.52 L1648.75 1240.52 L1648.75 1254.94 L1649.87 1254.94 L1649.87 1262.14 L1650.99 1262.14 L1650.99 1283.76 L1652.12 1283.76 L1652.12 1298.18 L1653.24 1298.18 L1653.24 1298.18 L1654.36 1298.18 L1654.36 1298.18 L1655.48 1298.18 L1655.48 1298.18 L1656.60 1298.18 L1656.60 1290.97 L1657.72 1290.97 L1657.72 1290.97 L1658.84 1290.97 L1658.84 1298.18 L1659.96 1298.18 L1659.96 1298.18 L1661.08 1298.18 L1661.08 1283.76 L1662.21 1283.76 L1662.21 1154.04 L1663.33 1154.04 L1663.33 1154.04 L1664.45 1154.04 L1664.45 1139.62 L1665.57 1139.62 L1665.57 1096.38 L1666.69 1096.38 L1666.69 1132.42 L1667.81 1132.42 L1667.81 1146.83 L1668.93 1146.83 L1668.93 1218.90 L1670.05 1218.90 L1670.05 1226.11 L1671.18 1226.11 L1671.18 1218.90 L1672.30 1218.90 L1672.30 1211.69 L1673.42 1211.69 L1673.42 1218.90 L1674.54 1218.90 L1674.54 1226.11 L1675.66 1226.11 L1675.66 1319.80Z" fill="#229070"/>
</g>
<rect x="154.70" y="815.31" width="2" height="505.49" fill="#777"/>
<rect x="155.90" y="1319.80" width="2260.30" height="1.3" fill="#cfe3d8"/>
<rect x="143.5" y="1319.05" width="11.5" height="1.5" fill="#999"/>
<text x="132.8" y="1326.6" font-size="21" fill="#333" text-anchor="end">0</text>
<rect x="143.5" y="1246.98" width="11.5" height="1.5" fill="#999"/>
<text x="132.8" y="1254.5" font-size="21" fill="#333" text-anchor="end">10</text>
<rect x="143.5" y="1174.91" width="11.5" height="1.5" fill="#999"/>
<text x="132.8" y="1182.5" font-size="21" fill="#333" text-anchor="end">20</text>
<rect x="143.5" y="1102.84" width="11.5" height="1.5" fill="#999"/>
<text x="132.8" y="1110.4" font-size="21" fill="#333" text-anchor="end">30</text>
<rect x="143.5" y="1030.77" width="11.5" height="1.5" fill="#999"/>
<text x="132.8" y="1038.3" font-size="21" fill="#333" text-anchor="end">40</text>
<rect x="143.5" y="958.70" width="11.5" height="1.5" fill="#999"/>
<text x="132.8" y="966.2" font-size="21" fill="#333" text-anchor="end">50</text>
<rect x="143.5" y="886.63" width="11.5" height="1.5" fill="#999"/>
<text x="132.8" y="894.2" font-size="21" fill="#333" text-anchor="end">60</text>
<rect x="143.5" y="814.56" width="11.5" height="1.5" fill="#999"/>
<text x="132.8" y="822.1" font-size="21" fill="#333" text-anchor="end">70</text>
<rect x="155.15" y="1320.80" width="1.5" height="10" fill="#999"/>
<text x="155.90" y="1357.3" font-size="23" fill="#000" stroke="#000" stroke-width="0.2" text-anchor="middle">lun. 06</text>
<rect x="478.05" y="1320.80" width="1.5" height="10" fill="#999"/>
<text x="478.80" y="1357.3" font-size="23" fill="#000" stroke="#000" stroke-width="0.2" text-anchor="middle">mar. 07</text>
<rect x="800.95" y="1320.80" width="1.5" height="10" fill="#999"/>
<text x="801.70" y="1357.3" font-size="23" fill="#000" stroke="#000" stroke-width="0.2" text-anchor="middle">mer. 08</text>
<rect x="1123.85" y="1320.80" width="1.5" height="10" fill="#999"/>
<text x="1124.60" y="1357.3" font-size="23" fill="#000" stroke="#000" stroke-width="0.2" text-anchor="middle">jeu. 09</text>
<rect x="1446.75" y="1320.80" width="1.5" height="10" fill="#999"/>
<text x="1447.50" y="1357.3" font-size="23" fill="#000" stroke="#000" stroke-width="0.2" text-anchor="middle">ven. 10</text>
<rect x="1769.65" y="1320.80" width="1.5" height="10" fill="#999"/>
<text x="1770.40" y="1357.3" font-size="23" fill="#000" stroke="#000" stroke-width="0.2" text-anchor="middle">sam. 11</text>
<rect x="2092.55" y="1320.80" width="1.5" height="10" fill="#999"/>
<text x="2093.30" y="1357.3" font-size="23" fill="#000" stroke="#000" stroke-width="0.2" text-anchor="middle">dim. 12</text>
<text x="0" y="0" font-size="22" fill="#333" text-anchor="middle" transform="translate(85.2,1067.4) rotate(-90)">kW</text>
<defs><linearGradient id="wg" x1="0" y1="0" x2="0" y2="1"><stop offset="0" stop-color="#00cfae"/><stop offset="1" stop-color="#00b898"/></linearGradient></defs>
<rect x="176.5" y="49" width="481.5" height="77.5" fill="#0a0a18"/>
<defs><linearGradient id="eg" x1="0" y1="79" x2="0" y2="110" gradientUnits="userSpaceOnUse"><stop offset="0.5" stop-color="#00f2ca"/><stop offset="0.5" stop-color="#00a68a"/><stop offset="0.68" stop-color="#00b898"/><stop offset="1" stop-color="#00c4a4"/></linearGradient></defs>
<g fill="none" stroke="url(#eg)" stroke-width="6.2" stroke-linecap="round">
<path d="M192.2 94.5 L211.5 94.5 A9.7 12.4 0 1 0 209.2 102.5" stroke-linecap="butt"/>
<path d="M237 87.4 A9.3 12.4 0 1 0 237 101.6"/>
<ellipse cx="257" cy="94.5" rx="10.65" ry="12.4"/>
</g>
<path d="M199 74.6 L204.6 72" stroke="#00f2ca" stroke-width="6.8" stroke-linecap="round"/>
<g fill="none" stroke="#fff" stroke-width="6.6" stroke-linecap="round" stroke-linejoin="round">
<path d="M275.7 86 L283.3 107 L291.5 81 L299.8 107 L313.8 67.5"/>
<path d="M316.5 86.5 Q321 82.5 326 82.5 Q334.8 82.5 334.8 90 L334.8 107.5"/><ellipse cx="325.6" cy="101" rx="7.6" ry="4.9" stroke-width="4"/>
<path d="M346.2 75 L346.2 103 Q346.2 107.5 352.5 107.5"/><path d="M361.5 75 L361.5 103 Q361.5 107.5 368.5 107.5"/><path d="M342 81.7 L372 81.7"/>
</g>
<ellipse cx="433.8" cy="89" rx="26" ry="28" fill="#00b4e0"/>
<g fill="none" stroke="#fff" stroke-width="2.3"><path d="M420 97 L420 80.5 L425 80.5 Q429.5 80.5 429.5 84.5 Q429.5 88.5 425 88.5 L420 88.5 M425 88.5 L430 97"/><path d="M434 81 L434 94 Q434 96.3 437 96.3"/><path d="M425 88.3 L449.5 88.3"/><path d="M449.5 88.3 Q449.5 84.3 444.3 84.3 Q438.8 84.3 438.8 90.5 Q438.8 96.5 444.5 96.5 Q447.5 96.5 449 95"/></g>
<g fill="#00a8d8" font-size="11">
<text x="468" y="78.5">Le réseau</text><text x="468" y="92">de transport</text><text x="468" y="105.5">d’électricité</text>
</g>
<rect x="546" y="61" width="101" height="56" fill="#fff"/>
<rect x="553.2" y="68.6" width="7.5" height="7" fill="#2a3a8c"/><rect x="563.7" y="68.6" width="8.3" height="7" fill="#e0202a"/><path d="M558.5 70.5 l2.2 0.8 l-1.6 1 l1.8 0.6 l-2.4 1.6 z" fill="#fff" opacity="0.7"/>
<g fill="#222" font-size="6.9" font-weight="bold"><text x="552.5" y="85">RÉPUBLIQUE</text><text x="552.5" y="93">FRANÇAISE</text></g>
<g fill="#333" font-size="4.2" font-style="italic" font-weight="bold"><text x="553" y="100">Liberté</text><text x="553" y="104.6">Égalité</text><text x="553" y="109.4">Fraternité</text></g>
<rect x="607.5" y="66.8" width="34.5" height="44.5" fill="#fff" stroke="#4a78c8" stroke-width="1"/>
<text x="624.7" y="75" font-size="6.2" font-weight="bold" fill="#e02424" text-anchor="middle" letter-spacing="0.6">ADEME</text>
<circle cx="624.2" cy="86.9" r="8.3" fill="#1a48a4"/><path d="M617.3 83.5 q3 -1 4 2 q1 3 -1 5 q1.5 2 2 3.5 q-3.5 -0.8 -5 -4 z M624 80 q3 0 3 2 q-2 1 -1 3 q3 1 2 4 q-3 -1 -4 -3 z" fill="#8c9ad4"/>
<g fill="#e85050" opacity="0.8"><rect x="611.5" y="99.3" width="25.5" height="1.5"/><rect x="611.5" y="102.8" width="25.5" height="1.5"/><rect x="611.5" y="106.3" width="25.5" height="1.5"/></g>
<rect x="169" y="135" width="492" height="59.2" fill="#d9d9d9"/><rect x="169" y="252.7" width="492" height="5.8" fill="#d9d9d9"/>
<rect x="169.0" y="194.2" width="3.4" height="58.5" fill="#d9d9d9"/>
<rect x="288.9" y="194.2" width="5.7" height="58.5" fill="#d9d9d9"/>
<rect x="411.6" y="194.2" width="5.4" height="58.5" fill="#d9d9d9"/>
<rect x="533.4" y="194.2" width="5.2" height="58.5" fill="#d9d9d9"/>
<rect x="655.6" y="194.2" width="5.4" height="58.5" fill="#d9d9d9"/>
<rect x="172.4" y="138.8" width="116.5" height="50.2" fill="#f2f2f2"/>
<clipPath id="wc0"><rect x="180.2" y="194.7" width="105.6" height="55.2"/></clipPath><g clip-path="url(#wc0)"><rect x="180.2" y="194.7" width="105.6" height="55.2" fill="url(#wg)"/><path d="M195.6 193.7 L208.5 193.7 C225.0 202.6 240.0 206.0 251.3 205.5 C264.9 205.0 276.8 201.6 286.8 197.2 L286.8 210.7 C276.8 214.9 264.9 218.1 250.9 218.3 C235.0 218.4 218.1 209.5 195.6 193.7 Z" fill="#00f3cb"/><path d="M208.5 193.7 C225.0 202.6 240.0 206.0 251.3 205.5 C264.9 205.0 276.8 201.6 286.8 197.2 L286.8 193.7 Z" fill="#00a68c"/></g>
<rect x="294.6" y="138.8" width="117.0" height="50.2" fill="#f2f2f2"/>
<clipPath id="wc1"><rect x="302.4" y="195.7" width="105.6" height="56.3"/></clipPath><g clip-path="url(#wc1)"><rect x="302.4" y="195.7" width="105.6" height="56.3" fill="url(#wg)"/><path d="M317.8 194.7 L330.7 194.7 C347.2 203.7 362.2 207.3 373.5 206.8 C387.1 206.3 399.0 202.7 409.0 198.2 L409.0 212.0 C399.0 216.3 387.1 219.5 373.1 219.7 C357.2 219.8 340.3 210.8 317.8 194.7 Z" fill="#00f3cb"/><path d="M330.7 194.7 C347.2 203.7 362.2 207.3 373.5 206.8 C387.1 206.3 399.0 202.7 409.0 198.2 L409.0 194.7 Z" fill="#00a68c"/></g>
<rect x="417.0" y="138.8" width="116.4" height="50.2" fill="#f2f2f2"/>
<clipPath id="wc2"><rect x="424.2" y="195.7" width="106.1" height="56.3"/></clipPath><g clip-path="url(#wc2)"><rect x="424.2" y="195.7" width="106.1" height="56.3" fill="url(#wg)"/><path d="M439.7 194.7 L452.6 194.7 C469.2 203.7 484.3 207.3 495.7 206.8 C509.3 206.3 521.3 202.7 531.3 198.2 L531.3 212.0 C521.3 216.3 509.3 219.5 495.3 219.7 C479.3 219.8 462.2 210.8 439.7 194.7 Z" fill="#00f3cb"/><path d="M452.6 194.7 C469.2 203.7 484.3 207.3 495.7 206.8 C509.3 206.3 521.3 202.7 531.3 198.2 L531.3 194.7 Z" fill="#00a68c"/></g>
<rect x="538.6" y="138.8" width="117.0" height="50.2" fill="#f2f2f2"/>
<clipPath id="wc3"><rect x="543.7" y="195.7" width="106.2" height="56.3"/></clipPath><g clip-path="url(#wc3)"><rect x="543.7" y="195.7" width="106.2" height="56.3" fill="url(#wg)"/><path d="M559.2 194.7 L572.2 194.7 C588.8 203.7 603.8 207.3 615.2 206.8 C628.9 206.3 640.9 202.7 650.9 198.2 L650.9 212.0 C640.9 216.3 628.9 219.5 614.8 219.7 C598.8 219.8 581.8 210.8 559.2 194.7 Z" fill="#00f3cb"/><path d="M572.2 194.7 C588.8 203.7 603.8 207.3 615.2 206.8 C628.9 206.3 640.9 202.7 650.9 198.2 L650.9 194.7 Z" fill="#00a68c"/></g>
<g font-size="33" fill="#111" text-anchor="middle">
<text x="231.2" y="175">J</text>
<text x="321.2" y="175">J</text><text x="353.9" y="173.5" font-size="30">+</text><text x="384.9" y="175">1</text>
<text x="443.0" y="175">J</text><text x="475.7" y="173.5" font-size="30">+</text><text x="508.5" y="175" font-weight="bold">2</text>
<text x="564.8" y="175">J</text><text x="597.4" y="173.5" font-size="30">+</text><text x="630.1" y="175">3</text>
</g>
<rect x="2322.5" y="1322" width="115" height="58" fill="#fff"/>
<g fill="none" stroke="#0870ba" stroke-width="5.2" stroke-linecap="round" stroke-linejoin="round">
<path d="M2360.9 1344.1 A12.4 12.4 0 1 0 2361.2 1351.5"/><path d="M2349.5 1351 L2362.5 1351"/>
<path d="M2370.2 1350.9 A6.95 7 0 1 1 2381.9 1351.4 L2369.2 1361 L2384.5 1361"/>
</g>
<path d="M2391.7 1324.7 L2383.6 1338.1 L2394.4 1339.2 L2389.3 1362.9 L2399.8 1338.5 L2391.7 1335.2 Z" fill="#e85a28"/>
<g fill="#f39420"><path d="M2403.2 1339 L2424.2 1339 L2418.4 1345 L2400.8 1345 Z"/><path d="M2399.3 1348.1 L2418 1348.1 L2412.7 1353.8 L2396.9 1353.8 Z"/><path d="M2395.5 1357.2 L2416.5 1357.2 L2410.8 1363.2 L2393.1 1363.2 Z"/></g>
<text x="2393.6" y="1334.8" font-size="7" fill="#e8683a" textLength="30" lengthAdjust="spacingAndGlyphs">FRANCE</text>
<text x="2339.6" y="1368.3" font-size="3.6" fill="#3a7cc4" textLength="74" lengthAdjust="spacingAndGlyphs">Optimisation des ressources énergétiques</text>
</svg>
<div style="position:absolute;left:1990px;top:67px;width:416px;height:31px;background:#fff;border-radius:0 0 9px 9px;box-shadow:3px 3px 4px -1px rgba(0,0,0,.13)"></div>
<div style="position:absolute;left:1990px;top:66px;width:416px;text-align:center;font-weight:bold;font-size:25.5px;line-height:30px;color:#000">LHB-site-L604</div>
<div class="bx" style="left:1990.7px;top:106.8px;width:415px;height:60.4px;line-height:54.5px;padding-left:19px">Consommation: 34 kWh</div>
<div class="bx" style="left:1990.7px;top:177.0px;width:415px;height:59.5px;line-height:54.5px;padding-left:19px">P Max :  4 kW</div>
<div class="bx" style="left:1990.7px;top:247.2px;width:415px;height:59.5px;line-height:54.5px;padding-left:19px">P min : 1 kW</div>
<div style="position:absolute;left:1048px;top:542px;width:522px;height:70px;background:rgba(255,255,255,.88);border-radius:9px"></div>
<div style="position:absolute;left:1048px;top:559px;width:522px;padding-left:10px;box-sizing:border-box;text-align:center;font-weight:bold;font-size:32.5px;line-height:38px;color:#111">dimanche 12 avril 2026</div>
<div class="bx" style="left:560.4px;top:804.5px;width:415px;height:61px;line-height:57px;padding-left:19px">Consommation: 786 kWh</div>
<div class="bx" style="left:1098.3px;top:804.5px;width:415px;height:61px;line-height:57px;padding-left:21px">P Max :  61 kW</div>
<div class="bx" style="left:1608.4px;top:804.5px;width:415px;height:61px;line-height:57px;padding-left:21px">P min : 0 kW</div>
</body></html>
